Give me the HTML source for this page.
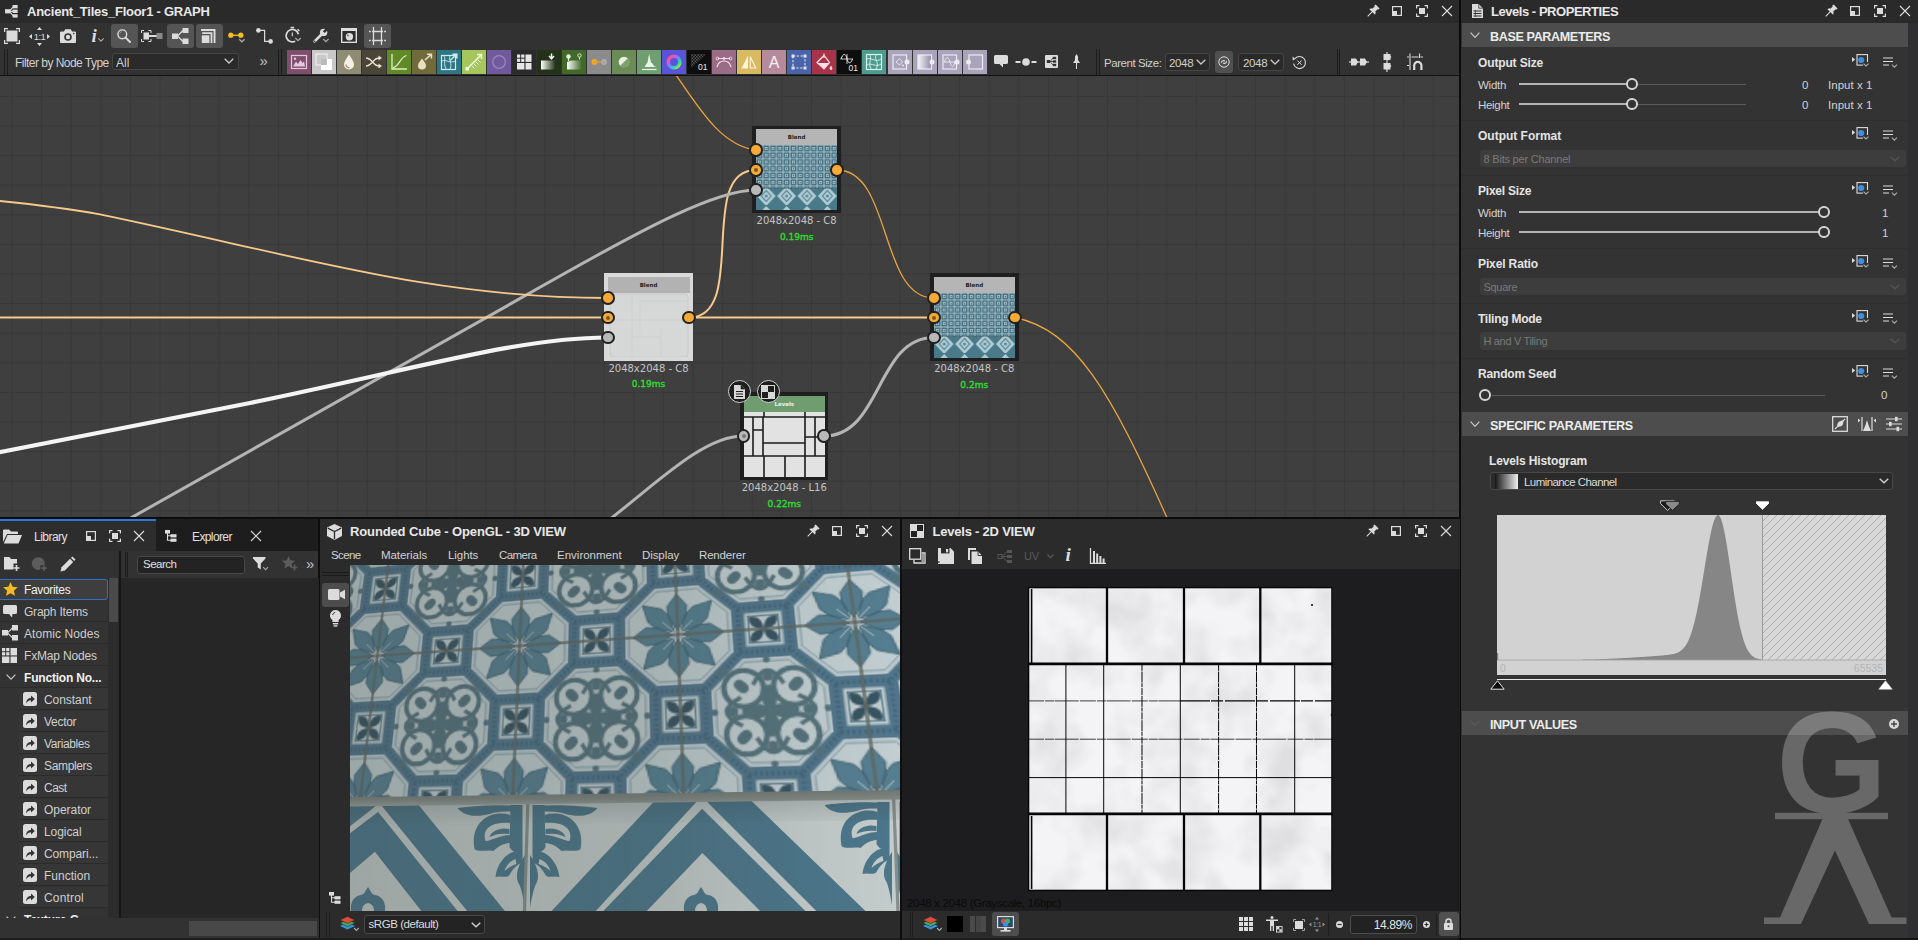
<!DOCTYPE html><html><head><meta charset="utf-8"><title>Substance Designer</title><style>
*{box-sizing:border-box;margin:0;padding:0}
html,body{width:1918px;height:940px;overflow:hidden;background:#1b1b1b}
body{font-family:"Liberation Sans",sans-serif;font-size:12px;color:#d6d6d6;position:relative}
.abs{position:absolute}
.t{position:absolute;white-space:nowrap;line-height:1}
.b{font-weight:bold}
svg{position:absolute;overflow:visible}
</style></head><body>
<div class="abs" style="left:0px;top:0px;width:1459.5px;height:22.5px;background:#2a2a2a;"></div>
<div class="abs" style="left:0px;top:22.5px;width:1459.5px;height:53px;background:#323232;"></div>
<div class="abs" style="left:0px;top:75px;width:1459.5px;height:1.2px;background:#121212;"></div>
<div class="abs" id="graph" style="left:0;top:76px;width:1459.5px;height:441px;background-color:#3f3f40;overflow:hidden;background-image:linear-gradient(to right,#38383a 1px,transparent 1px),linear-gradient(to bottom,#38383a 1px,transparent 1px);background-size:29.62px 29.62px;background-position:11.5px 19.8px">
<svg width="1459" height="441" viewBox="0 76 1459 441" style="left:0;top:0" fill="none" stroke-linecap="round">
<path d="M676,75 C700,110 722,146 756,150" stroke="#e9a43c" stroke-width="1.3"/>
<path d="M689,317.5 C749,317.5 696,170 756,170" stroke="#f7ca8c" stroke-width="2"/>
<path d="M90,541 L560,276 C640,231 715,190 756,190" stroke="#b4b4b4" stroke-width="3"/>
<path d="M-5,200.5 C40,205 70,209 100,214.4 C300,256 430,298 608,298" stroke="#f7ca8c" stroke-width="1.8"/>
<path d="M-5,317.5 L608,317.5" stroke="#f7ca8c" stroke-width="2"/>
<path d="M-5,453 L250,403 C420,368 520,337.5 608,337.5" stroke="#f4f4f4" stroke-width="4.2"/>
<path d="M689,317.5 L934,317.5" stroke="#f7ca8c" stroke-width="2"/>
<path d="M837,170 C892,170 879,298 934,298" stroke="#e9a43c" stroke-width="1.3"/>
<path d="M824,436 C882,436 876,337.5 934,337.5" stroke="#b4b4b4" stroke-width="3"/>
<path d="M594,532 L613.6,516.3 C660,480 705,436 743,436" stroke="#b4b4b4" stroke-width="3"/>
<path d="M1015,317.5 C1075,330 1110,390 1168,520" stroke="#e9a43c" stroke-width="1.3"/>
</svg>
</div>
<div class="abs" style="left:752.3px;top:125.8px;width:88.7px;height:87.6px;background:#1f1f1f"></div>
<div class="abs" style="left:755.8px;top:129.3px;width:81.7px;height:16px;background:#b5b5b5"></div>
<div class="t b" style="left:755.8px;top:135.3px;width:81.7px;text-align:center;font-size:5.5px;color:#222;font-family:'DejaVu Sans',sans-serif">Blend</div>
<div class="abs" style="left:755.8px;top:145.3px;width:81.7px;height:64.6px;overflow:hidden"><svg width="82" height="66" viewBox="0 0 82 66" style="left:0;top:0"><defs><pattern id="tp1" width="6.8" height="6.8" patternUnits="userSpaceOnUse"><rect width="6.8" height="6.8" fill="#a9c3cd"/><rect x="1.2" y="1.2" width="4.4" height="4.4" fill="none" stroke="#3a6777" stroke-width="1.3"/><rect x="2.8" y="2.8" width="1.3" height="1.3" fill="#3a6777"/></pattern><pattern id="tq1" width="20.4" height="20" patternUnits="userSpaceOnUse"><rect width="21" height="20" fill="#487a8a"/><path d="M10.2,1 L19.6,11 L10.2,21 L0.8,11 Z" fill="#b2ccd5"/><path d="M10.2,5.5 L15.2,11 L10.2,16.5 L5.2,11 Z" fill="none" stroke="#5d8d9c" stroke-width="1.2"/><circle cx="10.2" cy="11" r="1.6" fill="#5d8d9c"/></pattern></defs><rect width="82" height="43.56" fill="url(#tp1)"/><rect y="43.56" width="82" height="23.44" fill="url(#tq1)"/></svg></div>
<div class="t" style="left:736.65px;top:216.39999999999998px;width:120px;text-align:center;font-size:10px;color:#c4c4c4;font-family:'DejaVu Sans',sans-serif">2048x2048 - C8</div>
<div class="t" style="left:736.65px;top:232.89999999999998px;width:120px;text-align:center;font-size:9px;color:#2be02b;font-family:'DejaVu Sans',sans-serif;-webkit-text-stroke:0.3px #2be02b">0.19ms</div>
<div class="abs" style="left:749.3px;top:143.3px;width:13.4px;height:13.4px;border-radius:50%;background:#f7a935;border:2px solid #222"></div>
<div class="abs" style="left:749.3px;top:163.3px;width:13.4px;height:13.4px;border-radius:50%;background:#f7a935;border:2px solid #222"></div><div class="abs" style="left:754px;top:168px;width:4px;height:4px;border-radius:50%;background:#7a5a20"></div>
<div class="abs" style="left:749.3px;top:183.3px;width:13.4px;height:13.4px;border-radius:50%;background:#b9b9b9;border:2px solid #222"></div>
<div class="abs" style="left:830.3px;top:163.3px;width:13.4px;height:13.4px;border-radius:50%;background:#f7a935;border:2px solid #222"></div>
<div class="abs" style="left:604px;top:273.2px;width:89px;height:87.6px;background:#d9d9d9"></div>
<div class="abs" style="left:607.5px;top:276.7px;width:82.0px;height:16px;background:#b2b2b2"></div>
<div class="t b" style="left:607.5px;top:282.7px;width:82.0px;text-align:center;font-size:5.5px;color:#222;font-family:'DejaVu Sans',sans-serif">Blend</div>
<div class="abs" style="left:607.5px;top:292.7px;width:82.0px;height:64.6px;overflow:hidden"><svg width="82" height="66" viewBox="0 0 82 66" style="left:0;top:0"><rect width="82" height="66" fill="#dcdcdc"/><rect x="2" y="1" width="78" height="63" rx="3" fill="#d6d7d7" stroke="#c4c4c4" stroke-width="0.8"/><path d="M24,0V66M32,8V38M53,36V66M2,27H80M24,44H53M32,8H80" stroke="#cbcbcb" stroke-width="0.7" fill="none"/></svg></div>
<div class="t" style="left:588.5px;top:363.79999999999995px;width:120px;text-align:center;font-size:10px;color:#c4c4c4;font-family:'DejaVu Sans',sans-serif">2048x2048 - C8</div>
<div class="t" style="left:588.5px;top:380.29999999999995px;width:120px;text-align:center;font-size:9px;color:#2be02b;font-family:'DejaVu Sans',sans-serif;-webkit-text-stroke:0.3px #2be02b">0.19ms</div>
<div class="abs" style="left:601.3px;top:291.3px;width:13.4px;height:13.4px;border-radius:50%;background:#f7a935;border:2px solid #222"></div>
<div class="abs" style="left:601.3px;top:310.8px;width:13.4px;height:13.4px;border-radius:50%;background:#f7a935;border:2px solid #222"></div><div class="abs" style="left:606px;top:315.5px;width:4px;height:4px;border-radius:50%;background:#7a5a20"></div>
<div class="abs" style="left:601.3px;top:330.8px;width:13.4px;height:13.4px;border-radius:50%;background:#b9b9b9;border:2px solid #222"></div>
<div class="abs" style="left:682.3px;top:310.8px;width:13.4px;height:13.4px;border-radius:50%;background:#f7a935;border:2px solid #222"></div>
<div class="abs" style="left:930px;top:273.2px;width:88.5px;height:88px;background:#1f1f1f"></div>
<div class="abs" style="left:933.5px;top:276.7px;width:81.5px;height:16px;background:#b5b5b5"></div>
<div class="t b" style="left:933.5px;top:282.7px;width:81.5px;text-align:center;font-size:5.5px;color:#222;font-family:'DejaVu Sans',sans-serif">Blend</div>
<div class="abs" style="left:933.5px;top:292.7px;width:81.5px;height:65.0px;overflow:hidden"><svg width="82" height="66" viewBox="0 0 82 66" style="left:0;top:0"><defs><pattern id="tp3" width="6.8" height="6.8" patternUnits="userSpaceOnUse"><rect width="6.8" height="6.8" fill="#a9c3cd"/><rect x="1.2" y="1.2" width="4.4" height="4.4" fill="none" stroke="#3a6777" stroke-width="1.3"/><rect x="2.8" y="2.8" width="1.3" height="1.3" fill="#3a6777"/></pattern><pattern id="tq3" width="20.4" height="20" patternUnits="userSpaceOnUse"><rect width="21" height="20" fill="#487a8a"/><path d="M10.2,1 L19.6,11 L10.2,21 L0.8,11 Z" fill="#b2ccd5"/><path d="M10.2,5.5 L15.2,11 L10.2,16.5 L5.2,11 Z" fill="none" stroke="#5d8d9c" stroke-width="1.2"/><circle cx="10.2" cy="11" r="1.6" fill="#5d8d9c"/></pattern></defs><rect width="82" height="43.56" fill="url(#tp3)"/><rect y="43.56" width="82" height="23.44" fill="url(#tq3)"/></svg></div>
<div class="t" style="left:914.25px;top:364.2px;width:120px;text-align:center;font-size:10px;color:#c4c4c4;font-family:'DejaVu Sans',sans-serif">2048x2048 - C8</div>
<div class="t" style="left:914.25px;top:380.7px;width:120px;text-align:center;font-size:9px;color:#2be02b;font-family:'DejaVu Sans',sans-serif;-webkit-text-stroke:0.3px #2be02b">0.2ms</div>
<div class="abs" style="left:927.3px;top:291.3px;width:13.4px;height:13.4px;border-radius:50%;background:#f7a935;border:2px solid #222"></div>
<div class="abs" style="left:927.3px;top:310.8px;width:13.4px;height:13.4px;border-radius:50%;background:#f7a935;border:2px solid #222"></div><div class="abs" style="left:932px;top:315.5px;width:4px;height:4px;border-radius:50%;background:#7a5a20"></div>
<div class="abs" style="left:927.3px;top:330.8px;width:13.4px;height:13.4px;border-radius:50%;background:#b9b9b9;border:2px solid #222"></div>
<div class="abs" style="left:1008.3px;top:310.8px;width:13.4px;height:13.4px;border-radius:50%;background:#f7a935;border:2px solid #222"></div>
<div class="abs" style="left:740.4px;top:392.3px;width:87.8px;height:88px;background:#1f1f1f"></div>
<div class="abs" style="left:743.9px;top:395.8px;width:80.8px;height:16px;background:#6f9d6f"></div>
<div class="t b" style="left:743.9px;top:401.8px;width:80.8px;text-align:center;font-size:5.5px;color:#f0f0f0;font-family:'DejaVu Sans',sans-serif">Levels</div>
<div class="abs" style="left:743.9px;top:411.8px;width:80.8px;height:65.0px;overflow:hidden"><svg width="81" height="65" viewBox="0 0 81 65" style="left:0;top:0"><rect width="81" height="65" fill="#e2e2e2"/><path d="M0,5H81M0,44H81M9,5V44M19,5V44M61,5V44M71,5V44M20,0V5M61,0V5M19,31H61M20,44V65M41,44V65M61,44V65M9,18H19M61,25H81" stroke="#1c1c1c" stroke-width="1.6" fill="none"/></svg></div>
<div class="t" style="left:724.3px;top:483.3px;width:120px;text-align:center;font-size:10px;color:#c4c4c4;font-family:'DejaVu Sans',sans-serif">2048x2048 - L16</div>
<div class="t" style="left:724.3px;top:499.8px;width:120px;text-align:center;font-size:9px;color:#2be02b;font-family:'DejaVu Sans',sans-serif;-webkit-text-stroke:0.3px #2be02b">0.22ms</div>
<div class="abs" style="left:736.8px;top:429.3px;width:13.4px;height:13.4px;border-radius:50%;background:#b9b9b9;border:2px solid #222"></div>
<div class="abs" style="left:817.3px;top:429.3px;width:13.4px;height:13.4px;border-radius:50%;background:#b9b9b9;border:2px solid #222"></div>
<div class="abs" style="left:741.5px;top:434px;width:4px;height:4px;border-radius:50%;background:#777"></div>
<div class="abs" style="left:727.5px;top:380.0px;width:23px;height:23px;border-radius:50%;background:#1e1e1e;border:1.5px solid #d0d0d0"></div>
<div class="abs" style="left:756.8px;top:380.0px;width:23px;height:23px;border-radius:50%;background:#1e1e1e;border:1.5px solid #d0d0d0"></div>
<svg width="12" height="14" viewBox="0 0 12 14" style="left:733.5px;top:384.5px"><path d="M0,0H7L11,4V14H0Z" fill="#d8d8d8"/><path d="M7,0V4H11" fill="#1e1e1e" stroke="#1e1e1e" stroke-width="0.6"/><path d="M2,6.5H9M2,9H9M2,11.5H9" stroke="#1e1e1e" stroke-width="1.2"/></svg>
<svg width="14" height="14" viewBox="0 0 14 14" style="left:761.3px;top:384.5px"><rect x="0.5" y="0.5" width="13" height="13" fill="#1e1e1e" stroke="#d8d8d8"/><rect x="1" y="1" width="6" height="6" fill="#d8d8d8"/><rect x="7" y="7" width="6" height="6" fill="#d8d8d8"/></svg>
<svg width="13.5" height="12.6" viewBox="0 0 16 15" style="left:5px;top:5px"><g fill="#dcdcdc"><rect x="0" y="5" width="6" height="5"/><rect x="9" y="0" width="6" height="4"/><rect x="9" y="5.5" width="6" height="4"/><rect x="9" y="11" width="6" height="4"/></g><path d="M5,7.5 L10,2 M5,7.5 H10 M5,7.5 L10,13" stroke="#dcdcdc" stroke-width="1.4" fill="none"/></svg>
<div class="t b" style="left:27px;top:4.5px;font-size:13px;color:#e8e8e8;letter-spacing:-0.15px;letter-spacing:-0.255px">Ancient_Tiles_Floor1 - GRAPH</div>
<svg width="14" height="14" viewBox="0 0 14 14" style="left:1366px;top:4px"><g transform="rotate(45 7 7)"><rect x="4.2" y="0.5" width="5.6" height="2" fill="#dcdcdc"/><rect x="5" y="2" width="4" height="4.2" fill="#dcdcdc"/><path d="M2.8,8.2 L11.2,8.2 L9.6,5.8 L4.4,5.8 Z" fill="#dcdcdc"/><rect x="6.5" y="8" width="1" height="6.5" fill="#dcdcdc"/></g></svg>
<svg width="10" height="10" viewBox="0 0 10 10" style="left:1392px;top:6px"><rect x="0.6" y="0.6" width="8.8" height="8.8" fill="none" stroke="#dcdcdc" stroke-width="1.2"/><rect x="0" y="5" width="5" height="5" fill="#dcdcdc"/></svg>
<svg width="12" height="12" viewBox="0 0 12 12" style="left:1416px;top:5px"><path d="M0.6,3.5V0.6H3.5 M8.5,0.6H11.4V3.5 M11.4,8.5V11.4H8.5 M3.5,11.4H0.6V8.5" fill="none" stroke="#dcdcdc" stroke-width="1.2"/><rect x="3" y="3" width="6" height="6" fill="#dcdcdc"/></svg>
<svg width="10" height="10" viewBox="0 0 10 10" style="left:1442px;top:6px"><path d="M0,0L10,10M10,0L0,10" stroke="#dcdcdc" stroke-width="1.1"/></svg>
<div class="abs" style="left:111px;top:24px;width:27px;height:24px;background:#555555;border-radius:3px"></div>
<div class="abs" style="left:167px;top:24px;width:27px;height:24px;background:#555555;border-radius:3px"></div>
<div class="abs" style="left:195.5px;top:24px;width:27px;height:24px;background:#555555;border-radius:3px"></div>
<div class="abs" style="left:364px;top:24px;width:27px;height:24px;background:#555555;border-radius:3px"></div>
<svg width="16" height="16" viewBox="0 0 16 16" style="left:4px;top:28px"><rect x="2.5" y="2.5" width="11" height="11" fill="#dcdcdc"/><path d="M0.6,4V0.6H4 M12,0.6H15.4V4 M15.4,12V15.4H12 M4,15.4H0.6V12" fill="none" stroke="#dcdcdc" stroke-width="1.2"/></svg>
<svg width="21" height="19" viewBox="0 0 21 19" style="left:29px;top:27px"><path d="M10.5,0 L13,3 H8Z M10.5,19 L13,16 H8Z M0,9.5 L3,7 V12Z M21,9.5 L18,7 V12Z" fill="#dcdcdc"/><text x="10.5" y="13" font-size="9.5" text-anchor="middle" fill="#dcdcdc" font-family="Liberation Sans,sans-serif" letter-spacing="-0.6">1:1</text></svg>
<svg width="16" height="14" viewBox="0 0 16 14" style="left:60px;top:29px"><path d="M0,3.5 Q0,2.5 1,2.5 H4 L5.2,0.3 H10.8 L12,2.5 H15 Q16,2.5 16,3.5 V13 Q16,14 15,14 H1 Q0,14 0,13Z" fill="#dcdcdc"/><circle cx="8" cy="8" r="3.8" fill="#323232"/><circle cx="8" cy="8" r="2.2" fill="#dcdcdc"/><circle cx="13.7" cy="4.6" r="0.8" fill="#323232"/></svg>
<div class="t b" style="left:91.5px;top:25.5px;font-size:19px;color:#dcdcdc;font-family:'Liberation Serif',serif;font-style:italic">i</div>
<svg width="6" height="4" viewBox="0 0 6 4" style="left:98px;top:38px"><path d="M0.3,0.3 L3,3.2 L5.7,0.3" fill="none" stroke="#aaa" stroke-width="1.1"/></svg>
<svg width="14" height="14" viewBox="0 0 14 14" style="left:117px;top:29px"><circle cx="5.3" cy="5.3" r="4.4" fill="none" stroke="#dcdcdc" stroke-width="1.4"/><path d="M8.6,8.6 L13,13" stroke="#dcdcdc" stroke-width="2" stroke-linecap="round"/><path d="M2.8,4.6 Q3.3,2.9 5,2.7" stroke="#999" stroke-width="0.7" fill="none"/></svg>
<svg width="22" height="12" viewBox="0 0 22 12" style="left:141px;top:30px"><path d="M0.5,3V0.5H3 M7.5,0.5H10V3 M10,9V11.5H7.5 M3,11.5H0.5V9" fill="none" stroke="#dcdcdc" stroke-width="1"/><rect x="2.5" y="2.5" width="5.5" height="7" fill="#dcdcdc"/><rect x="8" y="5" width="8" height="2" fill="#dcdcdc"/><rect x="15.5" y="3" width="6" height="6" fill="#888"/></svg>
<svg width="17" height="16" viewBox="0 0 17 16" style="left:172px;top:28px"><g fill="#dcdcdc"><rect x="0" y="5.5" width="6" height="5.5"/><rect x="10.5" y="0" width="6" height="5"/><rect x="10.5" y="10.5" width="6" height="5.5"/></g><path d="M5.5,8 L11,2.5 M5.5,8 L11,13.5" stroke="#dcdcdc" stroke-width="1.3" fill="none"/></svg>
<svg width="15" height="14" viewBox="0 0 15 14" style="left:201px;top:29px"><path d="M0,0H14.5V14H12.6V1.9H0Z M1.2,3.2H11.4V14H9.6V5H1.2Z" fill="#dcdcdc"/><rect x="0.8" y="6.3" width="7.6" height="7.7" fill="#dcdcdc"/></svg>
<svg width="18" height="12" viewBox="0 0 18 12" style="left:228px;top:32px"><circle cx="2.8" cy="3.2" r="2.6" fill="#f5c020"/><circle cx="12.8" cy="3.2" r="2.6" fill="#f5c020"/><rect x="2" y="2.6" width="11" height="1.3" fill="#f5c020"/><path d="M11.2,7.2 L13.9,9.8 L16.6,7.2" fill="none" stroke="#aaa" stroke-width="1.2"/></svg>
<svg width="18" height="16" viewBox="0 0 18 16" style="left:256px;top:28px"><circle cx="2.4" cy="2.4" r="2.3" fill="#dcdcdc"/><circle cx="14.6" cy="13.4" r="2.3" fill="#dcdcdc"/><path d="M2.4,2.4H8.6V13.4H14.6" fill="none" stroke="#dcdcdc" stroke-width="1.2"/></svg>
<svg width="18" height="18" viewBox="0 0 18 18" style="left:284px;top:26px"><path d="M11.2,15.2 A6.2,6.2 0 1 1 14.4,8.2" fill="none" stroke="#dcdcdc" stroke-width="1.7"/><rect x="6.5" y="0.8" width="3.6" height="1.4" fill="#dcdcdc"/><path d="M8.3,6.4V10.2" stroke="#dcdcdc" stroke-width="1.1"/><path d="M13.6,3.2 L15.4,5" stroke="#dcdcdc" stroke-width="1.3"/><path d="M11.3,12 L14,14.7 L16.7,12" fill="none" stroke="#aaa" stroke-width="1.2"/></svg>
<svg width="18" height="16" viewBox="0 0 18 16" style="left:312px;top:28px"><path d="M2.6,13.4 L10.2,5.8" stroke="#dcdcdc" stroke-width="2.7" stroke-linecap="round"/><circle cx="11.6" cy="4.4" r="3.7" fill="#dcdcdc"/><path d="M11.8,4.2 L16,0" stroke="#323232" stroke-width="2.6"/><circle cx="2.7" cy="13.3" r="0.8" fill="#323232"/><path d="M11.2,11 L13.9,13.7 L16.6,11" fill="none" stroke="#aaa" stroke-width="1.2"/></svg>
<svg width="16" height="15" viewBox="0 0 16 15" style="left:341px;top:28px"><rect x="0.7" y="0.7" width="14.6" height="13.6" fill="#2b2b2b" stroke="#dcdcdc" stroke-width="1.4"/><rect x="0" y="0" width="16" height="3" fill="#dcdcdc"/><circle cx="8.4" cy="8.8" r="3.7" fill="#dcdcdc"/><circle cx="6.9" cy="7.5" r="1.1" fill="#777"/></svg>
<svg width="17" height="18" viewBox="0 0 17 18" style="left:369px;top:27px"><path d="M4.5,0V18 M12.5,0V18 M0,4.5H1.8 M3,4.5H14 M15.2,4.5H17 M0,13.5H1.8 M3,13.5H14 M15.2,13.5H17" stroke="#dcdcdc" stroke-width="1.3" fill="none"/></svg>
<div class="abs" style="left:4px;top:49px;width:1px;height:26px;background:#1c1c1c;"></div>
<div class="abs" style="left:7px;top:49px;width:1px;height:26px;background:#1c1c1c;"></div>
<div class="t" style="left:15px;top:57.3px;font-size:12px;color:#d0d0d0;letter-spacing:-0.1px;letter-spacing:-0.533px">Filter by Node Type</div>
<div class="abs" style="left:112px;top:53px;width:127px;height:17px;background:#2a2a2a;border:1px solid #454545;border-radius:3px"></div>
<div class="t" style="left:116px;top:57.3px;font-size:12px;color:#d0d0d0;">All</div>
<svg width="10" height="6" viewBox="0 0 10 6" style="left:224px;top:58px"><path d="M0.7,0.7 L5,5 L9.3,0.7" fill="none" stroke="#c8c8c8" stroke-width="1.3"/></svg>
<div class="t" style="left:259.5px;top:53px;font-size:15px;color:#c0c0c0;">»</div>
<div class="abs" style="left:278px;top:49px;width:1px;height:26px;background:#1c1c1c;"></div>
<div class="abs" style="left:280.5px;top:49px;width:1px;height:26px;background:#1c1c1c;"></div>
<div class="abs" style="left:287px;top:50px;width:24px;height:24px;background:#7d4f6c"></div>
<svg width="24" height="24" viewBox="0 0 24 24" style="left:287px;top:50px"><rect x="4.5" y="5.5" width="15" height="13" fill="none" stroke="#e8c8dc" stroke-width="1.2"/><path d="M6,16.5 L9,11.5 L11,14 L13.5,10 L15.5,13 L17,11.5 L18,16.5Z" fill="#e8c8dc"/><circle cx="8" cy="8.8" r="1.2" fill="#e8c8dc"/></svg>
<div class="abs" style="left:312px;top:50px;width:24px;height:24px;background:#c9c9c9"></div>
<svg width="24" height="24" viewBox="0 0 24 24" style="left:312px;top:50px"><rect x="4" y="4" width="11" height="11" fill="none" stroke="#eee" stroke-width="1.2"/><rect x="9" y="9" width="11" height="11" fill="#fff"/><rect x="9" y="9" width="6" height="6" fill="#bbb"/></svg>
<div class="abs" style="left:337px;top:50px;width:24px;height:24px;background:#908c73"></div>
<svg width="24" height="24" viewBox="0 0 24 24" style="left:337px;top:50px"><path d="M12,4.5 C14,8 17,11 17,14.5 A5,5 0 0 1 7,14.5 C7,11 10,8 12,4.5Z" fill="#f4f0e4"/><path d="M9,14.5 A3,3 0 0 0 12.5,17.6" stroke="#908c73" stroke-width="1.2" fill="none"/></svg>
<div class="abs" style="left:362px;top:50px;width:24px;height:24px;background:#4a4536"></div>
<svg width="24" height="24" viewBox="0 0 24 24" style="left:362px;top:50px"><path d="M4,8 C10,8 11,16 17,16 M4,16 C10,16 11,8 17,8" stroke="#e8e4d4" stroke-width="1.5" fill="none"/><path d="M16.5,5.5 L20,8 L16.5,10.5Z M16.5,13.5 L20,16 L16.5,18.5Z" fill="#e8e4d4"/></svg>
<div class="abs" style="left:387px;top:50px;width:24px;height:24px;background:#5f8a27"></div>
<svg width="24" height="24" viewBox="0 0 24 24" style="left:387px;top:50px"><path d="M5,4V19H20" stroke="#e4f0c8" stroke-width="1.3" fill="none"/><path d="M6,17.5 C12,17 13,7 19.5,5.5" stroke="#e4f0c8" stroke-width="1.2" fill="none"/></svg>
<div class="abs" style="left:412px;top:50px;width:24px;height:24px;background:#716b3c"></div>
<svg width="24" height="24" viewBox="0 0 24 24" style="left:412px;top:50px"><path d="M10,8.5 C11.5,11 14,13 14,15.5 A4,4 0 0 1 6,15.5 C6,13 8.5,11 10,8.5Z" fill="#e8e0c0"/><path d="M13,10 L19,4.5 M15,4.2 H19.4 V8.6" stroke="#e8e0c0" stroke-width="1.6" fill="none"/></svg>
<div class="abs" style="left:437px;top:50px;width:24px;height:24px;background:#2f7684"></div>
<svg width="24" height="24" viewBox="0 0 24 24" style="left:437px;top:50px"><rect x="4.5" y="5.5" width="14" height="14" fill="none" stroke="#d0ecf0" stroke-width="1.2"/><path d="M7,6 C9,10 6,13 9,19 M13,6 C11,11 16,13 13,19 M5,11 C9,9 13,14 18,11" stroke="#d0ecf0" stroke-width="0.9" fill="none"/><path d="M13,10.5 L19.5,4.5 M15.5,4.2 H19.8 V8.4" stroke="#d0ecf0" stroke-width="1.5" fill="none"/></svg>
<div class="abs" style="left:462px;top:50px;width:24px;height:24px;background:#a5c65d"></div>
<svg width="24" height="24" viewBox="0 0 24 24" style="left:462px;top:50px"><path d="M5,19 L19,5 M15,4.6 H19.5 V9" stroke="#f4fce0" stroke-width="1.5" fill="none"/><rect x="3.5" y="17" width="3.5" height="3.5" fill="#f4fce0"/><path d="M10,16 L12.5,18.5 M12,14 L14.5,16.5 M14,12 L16.5,14.5 M16,10 L18.5,12.5" stroke="#f4fce0" stroke-width="1"/></svg>
<div class="abs" style="left:487px;top:50px;width:24px;height:24px;background:#705a9c"></div>
<svg width="24" height="24" viewBox="0 0 24 24" style="left:487px;top:50px"><circle cx="12" cy="12" r="6.3" fill="none" stroke="#9c88c8" stroke-width="1.2"/></svg>
<div class="abs" style="left:512px;top:50px;width:24px;height:24px;background:#2b2b2b"></div>
<svg width="24" height="24" viewBox="0 0 24 24" style="left:512px;top:50px"><g fill="#e6e6e6"><rect x="5" y="4.5" width="3.2" height="3.2"/><rect x="9.2" y="4.5" width="3.2" height="3.2"/><rect x="5" y="8.7" width="3.2" height="3.2"/><rect x="9.2" y="8.7" width="3.2" height="3.2"/><rect x="13.5" y="4.5" width="6" height="7.4"/><rect x="5" y="13" width="7.4" height="6.5"/><rect x="13.5" y="13" width="6" height="6.5"/></g></svg>
<div class="abs" style="left:537px;top:50px;width:24px;height:24px;background:#233219"></div>
<svg width="24" height="24" viewBox="0 0 24 24" style="left:537px;top:50px"><defs><linearGradient id="g10" x1="0" x2="1"><stop offset="0" stop-color="#fff"/><stop offset="1" stop-color="#2a3a20"/></linearGradient></defs><rect x="4" y="10.5" width="14" height="9" fill="url(#g10)"/><path d="M14.5,3.5V8 M12,6 L14.5,8.8 L17,6" stroke="#f0f0f0" stroke-width="1.5" fill="none"/></svg>
<div class="abs" style="left:562px;top:50px;width:24px;height:24px;background:#40692a"></div>
<svg width="24" height="24" viewBox="0 0 24 24" style="left:562px;top:50px"><defs><linearGradient id="g11" x1="0" x2="1"><stop offset="0" stop-color="#fff"/><stop offset="1" stop-color="#4a7434"/></linearGradient></defs><path d="M5,12 L9,10.5 H19 V19.5 H5Z" fill="url(#g11)"/><circle cx="6.5" cy="6.5" r="2.2" fill="#e6f0dc"/><path d="M6.5,8 V11" stroke="#e6f0dc" stroke-width="1.2"/><circle cx="17.5" cy="5.5" r="1.7" fill="none" stroke="#e6f0dc" stroke-width="0.9"/><path d="M17.5,7.2V9.5" stroke="#e6f0dc" stroke-width="0.9"/></svg>
<div class="abs" style="left:587px;top:50px;width:24px;height:24px;background:#8b8b8b"></div>
<svg width="24" height="24" viewBox="0 0 24 24" style="left:587px;top:50px"><circle cx="7.5" cy="12" r="3" fill="#f5a623"/><circle cx="17" cy="12" r="3" fill="#aaa"/><rect x="7" y="11.3" width="10" height="1.4" fill="#c9a060"/></svg>
<div class="abs" style="left:612px;top:50px;width:24px;height:24px;background:#6c8c57"></div>
<svg width="24" height="24" viewBox="0 0 24 24" style="left:612px;top:50px"><circle cx="12" cy="12" r="5.3" fill="#e8f0e0"/><path d="M8.2,15.8 A5.3,5.3 0 0 0 15.8,8.2Z" fill="#7f9f6c"/></svg>
<div class="abs" style="left:637px;top:50px;width:24px;height:24px;background:#6f9f70"></div>
<svg width="24" height="24" viewBox="0 0 24 24" style="left:637px;top:50px"><path d="M5,17 H7.5 L9,14.5 L10.5,12.5 L11.5,7 L12.3,4 L13,8 L14,12.5 L15.5,13.5 L17,16 L19.5,17Z" fill="#e8f6e8"/><path d="M5,19.5H19.5" stroke="#e8f6e8" stroke-width="1.2"/></svg>
<div class="abs" style="left:662px;top:50px;width:24px;height:24px;background:#5a55d8"></div>
<svg width="24" height="24" viewBox="0 0 24 24" style="left:662px;top:50px"><defs><linearGradient id="g15" x1="0" y1="0" x2="1" y2="1"><stop offset="0" stop-color="#ff5a5a"/><stop offset="0.3" stop-color="#e050e0"/><stop offset="0.55" stop-color="#40a0ff"/><stop offset="0.8" stop-color="#40e080"/><stop offset="1" stop-color="#f0e040"/></linearGradient></defs><circle cx="12" cy="12" r="5.8" fill="none" stroke="url(#g15)" stroke-width="3.6"/></svg>
<div class="abs" style="left:687px;top:50px;width:24px;height:24px;background:#0e0e0e"></div>
<svg width="24" height="24" viewBox="0 0 24 24" style="left:687px;top:50px"><defs><pattern id="ck16" width="3" height="3" patternUnits="userSpaceOnUse"><rect width="1.5" height="1.5" fill="#555"/><rect x="1.5" y="1.5" width="1.5" height="1.5" fill="#555"/></pattern></defs><path d="M4,4H19L4,18Z" fill="url(#ck16)"/><text x="11" y="20" font-size="8.5" fill="#e8e8e8" font-family="Liberation Sans,sans-serif">01</text></svg>
<div class="abs" style="left:712px;top:50px;width:24px;height:24px;background:#9b6c85"></div>
<svg width="24" height="24" viewBox="0 0 24 24" style="left:712px;top:50px"><path d="M5,17 C7,9 17,9 19,17" stroke="#f8e4f0" stroke-width="1.2" fill="none"/><path d="M6,8.5 H18" stroke="#f8e4f0" stroke-width="0.9"/><circle cx="5.5" cy="8.5" r="1.3" fill="none" stroke="#f8e4f0" stroke-width="0.9"/><circle cx="18.5" cy="8.5" r="1.3" fill="none" stroke="#f8e4f0" stroke-width="0.9"/><rect x="10.8" y="7.3" width="2.4" height="2.4" fill="#f8e4f0"/></svg>
<div class="abs" style="left:737px;top:50px;width:24px;height:24px;background:#d9b962"></div>
<svg width="24" height="24" viewBox="0 0 24 24" style="left:737px;top:50px"><path d="M11,5.5 V18.5 H4.5Z" fill="#fff6dc"/><path d="M13.2,6.8 V18 H18.8Z" fill="none" stroke="#fff6dc" stroke-width="1.1"/></svg>
<div class="abs" style="left:762px;top:50px;width:24px;height:24px;background:#b58b9b"></div>
<svg width="24" height="24" viewBox="0 0 24 24" style="left:762px;top:50px"><text x="12" y="18" font-size="16" text-anchor="middle" fill="#fdf0f6" font-family="Liberation Sans,sans-serif">A</text></svg>
<div class="abs" style="left:787px;top:50px;width:24px;height:24px;background:#4b63a9"></div>
<svg width="24" height="24" viewBox="0 0 24 24" style="left:787px;top:50px"><rect x="6" y="6" width="12" height="12" fill="none" stroke="#dfe6fa" stroke-width="1.1" stroke-dasharray="2.2 1.6"/><g fill="#dfe6fa"><rect x="4.5" y="4.5" width="3" height="3"/><rect x="16.5" y="4.5" width="3" height="3"/><rect x="4.5" y="16.5" width="3" height="3"/><rect x="16.5" y="16.5" width="3" height="3"/></g></svg>
<div class="abs" style="left:812px;top:50px;width:24px;height:24px;background:#a93349"></div>
<svg width="24" height="24" viewBox="0 0 24 24" style="left:812px;top:50px"><path d="M5,12.5 L12,5.5 L17.5,12.5 L12,19Z" fill="none" stroke="#fbe0e6" stroke-width="1.2"/><path d="M5.6,13 H17 L12,18.6Z" fill="#fbe0e6"/><path d="M12,3.5V8" stroke="#fbe0e6" stroke-width="1.1"/><path d="M19,15.5 C19.8,17 20.4,17.6 20.4,18.5 A1.4,1.4 0 0 1 17.6,18.5 C17.6,17.6 18.2,17 19,15.5Z" fill="#fbe0e6"/></svg>
<div class="abs" style="left:837px;top:50px;width:24px;height:24px;background:#0e0e0e"></div>
<svg width="24" height="24" viewBox="0 0 24 24" style="left:837px;top:50px"><path d="M4,9 C6,3 9,3 10,9 C11,14 14,14 15.5,9" stroke="#e8e8e8" stroke-width="1" fill="none"/><path d="M3.5,9H16 M10,4V14" stroke="#e8e8e8" stroke-width="0.8"/><text x="11.5" y="20.5" font-size="8.5" fill="#e8e8e8" font-family="Liberation Sans,sans-serif">01</text></svg>
<div class="abs" style="left:862px;top:50px;width:24px;height:24px;background:#4c9b8d"></div>
<svg width="24" height="24" viewBox="0 0 24 24" style="left:862px;top:50px"><rect x="4.5" y="4.5" width="15" height="15" fill="none" stroke="#d8f4ee" stroke-width="1.2"/><path d="M8,5 C10,9 6,13 9,19 M14,5 C12,10 18,13 14,19 M5,9 C9,7 14,13 19,9 M5,15 C9,12 14,18 19,14" stroke="#d8f4ee" stroke-width="0.9" fill="none"/></svg>
<div class="abs" style="left:888px;top:50px;width:24px;height:24px;background:#a9a4ba"></div>
<svg width="24" height="24" viewBox="0 0 24 24" style="left:888px;top:50px"><rect x="5" y="5" width="13.5" height="14" fill="none" stroke="#ecebf4" stroke-width="1.2"/><path d="M8,12 L11.5,8.5 L14.5,12 L11.5,15Z" fill="none" stroke="#ecebf4" stroke-width="0.9"/><circle cx="19" cy="12" r="2.5" fill="#ecebf4"/><circle cx="15" cy="15.5" r="0.9" fill="#ecebf4"/></svg>
<div class="abs" style="left:913px;top:50px;width:24px;height:24px;background:#a9a4ba"></div>
<svg width="24" height="24" viewBox="0 0 24 24" style="left:913px;top:50px"><defs><linearGradient id="g25" x1="0" x2="1"><stop offset="0" stop-color="#f4f4fa"/><stop offset="1" stop-color="#8e8aa2"/></linearGradient></defs><rect x="5" y="5" width="13.5" height="14" fill="url(#g25)" stroke="#ecebf4" stroke-width="1.2"/><circle cx="19" cy="12" r="2.5" fill="#ecebf4"/></svg>
<div class="abs" style="left:938px;top:50px;width:24px;height:24px;background:#a9a4ba"></div>
<svg width="24" height="24" viewBox="0 0 24 24" style="left:938px;top:50px"><rect x="5" y="5" width="13.5" height="14" fill="none" stroke="#ecebf4" stroke-width="1.2"/><path d="M6.5,12 C8,6 10.5,6 12,12 C13.5,18 15.5,18 17,12 M6,12H17" stroke="#ecebf4" stroke-width="0.9" fill="none"/><circle cx="19" cy="12" r="2.5" fill="#ecebf4"/></svg>
<div class="abs" style="left:963px;top:50px;width:24px;height:24px;background:#a9a4ba"></div>
<svg width="24" height="24" viewBox="0 0 24 24" style="left:963px;top:50px"><rect x="6" y="5" width="13.5" height="14" fill="none" stroke="#ecebf4" stroke-width="1.2"/><circle cx="5.5" cy="12" r="2.5" fill="#ecebf4"/></svg>
<svg width="14" height="13" viewBox="0 0 14 13" style="left:994px;top:55px"><path d="M1.5,0H12.5Q14,0 14,1.5V7.5Q14,9 12.5,9H9L9,12.5L5.5,9H1.5Q0,9 0,7.5V1.5Q0,0 1.5,0Z" fill="#dcdcdc"/></svg>
<svg width="22" height="8" viewBox="0 0 22 8" style="left:1015px;top:58px"><circle cx="11" cy="4" r="3.8" fill="#dcdcdc"/><rect x="0.5" y="3" width="5" height="2" fill="#dcdcdc"/><rect x="16.5" y="3" width="5" height="2" fill="#dcdcdc"/></svg>
<svg width="13" height="13" viewBox="0 0 13 13" style="left:1045px;top:55px"><rect width="13" height="13" rx="1" fill="#dcdcdc"/><g fill="#323232"><rect x="1.8" y="5" width="3.2" height="3"/><rect x="7.8" y="1.8" width="3.4" height="2.4"/><rect x="7.8" y="5.3" width="3.4" height="2.4"/><rect x="7.8" y="8.8" width="3.4" height="2.4"/></g><path d="M5,6.5 L8,3 M5,6.5H8 M5,6.5 L8,10" stroke="#323232" stroke-width="0.8"/></svg>
<svg width="9" height="15" viewBox="0 0 9 15" style="left:1072px;top:54px"><path d="M4.5,0 L6,2.5 V6 L8,9 H1 L3,6 V2.5Z" fill="#dcdcdc"/><rect x="4" y="9" width="1" height="6" fill="#dcdcdc"/></svg>
<div class="abs" style="left:1096px;top:49px;width:1px;height:26px;background:#1c1c1c;"></div>
<div class="abs" style="left:1098.5px;top:49px;width:1px;height:26px;background:#1c1c1c;"></div>
<div class="t" style="left:1104px;top:57.5px;font-size:11.5px;color:#d0d0d0;letter-spacing:-0.2px;letter-spacing:-0.437px">Parent Size:</div>
<div class="abs" style="left:1165px;top:53px;width:45px;height:18px;background:#2a2a2a;border:1px solid #454545;border-radius:3px"></div>
<div class="t" style="left:1169px;top:58px;font-size:11.5px;color:#d0d0d0;letter-spacing:-0.4px;letter-spacing:-0.346px">2048</div>
<svg width="10" height="6" viewBox="0 0 10 6" style="left:1196px;top:59px"><path d="M0.7,0.7 L5,5 L9.3,0.7" fill="none" stroke="#c8c8c8" stroke-width="1.3"/></svg>
<div class="abs" style="left:1215px;top:51px;width:18px;height:22px;background:#505050;border-radius:3px"></div>
<svg width="12" height="12" viewBox="0 0 12 12" style="left:1218px;top:56px"><circle cx="6" cy="6" r="5.2" fill="none" stroke="#dcdcdc" stroke-width="1"/><path d="M3.4,6.8 C3.4,4.6 6,4.2 7,5.2 M8.6,5.2 C8.6,7.4 6,7.8 5,6.8" stroke="#dcdcdc" stroke-width="1.1" fill="none"/></svg>
<div class="abs" style="left:1238px;top:53px;width:46px;height:18px;background:#2a2a2a;border:1px solid #454545;border-radius:3px"></div>
<div class="t" style="left:1243px;top:58px;font-size:11.5px;color:#d0d0d0;letter-spacing:-0.4px;letter-spacing:-0.346px">2048</div>
<svg width="10" height="6" viewBox="0 0 10 6" style="left:1270px;top:59px"><path d="M0.7,0.7 L5,5 L9.3,0.7" fill="none" stroke="#c8c8c8" stroke-width="1.3"/></svg>
<svg width="15" height="15" viewBox="0 0 15 15" style="left:1292px;top:55px"><path d="M3,3.6 A6,6 0 1 1 1.6,8.6" fill="none" stroke="#dcdcdc" stroke-width="1.1"/><path d="M0.6,1.6 L3.4,4 L0.8,5.6Z" fill="#dcdcdc"/><path d="M5.4,5.6 L9.6,9.8 M9.6,5.6 L5.4,9.8" stroke="#dcdcdc" stroke-width="1"/></svg>
<div class="abs" style="left:1336.5px;top:49px;width:1px;height:26px;background:#1c1c1c;"></div>
<div class="abs" style="left:1339px;top:49px;width:1px;height:26px;background:#1c1c1c;"></div>
<svg width="20" height="10" viewBox="0 0 20 10" style="left:1349px;top:57px"><rect x="0" y="4.4" width="20" height="1.2" fill="#dcdcdc"/><path d="M2,1.5H7L9,5L7,8.5H2Z M11,1.5H16L18,5L16,8.5H11Z" fill="#dcdcdc"/></svg>
<svg width="10" height="20" viewBox="0 0 10 20" style="left:1382px;top:52px"><rect x="4.4" y="0" width="1.2" height="20" fill="#dcdcdc"/><path d="M1.5,2H8.5V4L9.5,5L8.5,6V8H1.5Z M1.5,11H8.5V13L9.5,14L8.5,15V17.5H1.5Z" fill="#dcdcdc"/></svg>
<svg width="17" height="18" viewBox="0 0 17 18" style="left:1407px;top:53px"><path d="M3,0.5V17 M12.5,0.5V5 M0,4H2 M4.5,4H11.5 M13.5,4H16 M0,12.5H2" stroke="#dcdcdc" stroke-width="1.1" fill="none"/><path d="M7.2,17 V12.5 A3.6,3.6 0 0 1 14.4,12.5 V17" stroke="#dcdcdc" stroke-width="2.2" fill="none"/></svg>
<div class="abs" style="left:1459.4px;top:0px;width:1.8px;height:940px;background:#0c0c0c;"></div>
<div class="abs" style="left:1461px;top:0px;width:457px;height:940px;background:#333333;"></div>
<div class="abs" style="left:1461px;top:0px;width:457px;height:22.8px;background:#2a2a2a;"></div>
<div class="abs" style="left:1908.3px;top:22.8px;width:9.7px;height:915px;background:#2f2e30;"></div>
<div class="abs" style="left:1461px;top:937.6px;width:457px;height:2.4px;background:#141414;"></div>
<svg width="11" height="14" viewBox="0 0 11 14" style="left:1472px;top:4px"><path d="M0,0H6.5L11,4.5V14H0Z" fill="#dcdcdc"/><path d="M6.5,0V4.5H11Z" fill="#2a2a2a"/><path d="M7.2,0.8 L10.2,3.8 H7.2Z" fill="#dcdcdc"/><path d="M1.5,7H9.5M1.5,9.5H9.5M1.5,12H9.5" stroke="#2a2a2a" stroke-width="1.1"/><path d="M3.3,6V13" stroke="#2a2a2a" stroke-width="0.7"/></svg>
<div class="t b" style="left:1491px;top:4.5px;font-size:13px;color:#e8e8e8;letter-spacing:-0.45px;letter-spacing:-0.459px">Levels - PROPERTIES</div>
<svg width="14" height="14" viewBox="0 0 14 14" style="left:1824px;top:4px"><g transform="rotate(45 7 7)"><rect x="4.2" y="0.5" width="5.6" height="2" fill="#dcdcdc"/><rect x="5" y="2" width="4" height="4.2" fill="#dcdcdc"/><path d="M2.8,8.2 L11.2,8.2 L9.6,5.8 L4.4,5.8 Z" fill="#dcdcdc"/><rect x="6.5" y="8" width="1" height="6.5" fill="#dcdcdc"/></g></svg>
<svg width="10" height="10" viewBox="0 0 10 10" style="left:1850px;top:6px"><rect x="0.6" y="0.6" width="8.8" height="8.8" fill="none" stroke="#dcdcdc" stroke-width="1.2"/><rect x="0" y="5" width="5" height="5" fill="#dcdcdc"/></svg>
<svg width="12" height="12" viewBox="0 0 12 12" style="left:1874px;top:5px"><path d="M0.6,3.5V0.6H3.5 M8.5,0.6H11.4V3.5 M11.4,8.5V11.4H8.5 M3.5,11.4H0.6V8.5" fill="none" stroke="#dcdcdc" stroke-width="1.2"/><rect x="3" y="3" width="6" height="6" fill="#dcdcdc"/></svg>
<svg width="10" height="10" viewBox="0 0 10 10" style="left:1900px;top:6px"><path d="M0,0L10,10M10,0L0,10" stroke="#dcdcdc" stroke-width="1.1"/></svg>
<div class="abs" style="left:1462px;top:23px;width:446px;height:23.8px;background:#4d4d4d;"></div>
<svg width="10" height="7" viewBox="0 0 10 7" style="left:1470px;top:32px"><path d="M0.6,0.6 L5,5.4 L9.4,0.6" fill="none" stroke="#c8c8c8" stroke-width="1.2"/></svg>
<div class="t b" style="left:1490px;top:30.8px;font-size:12.6px;color:#ececec;letter-spacing:-0.35px;letter-spacing:-0.386px">BASE PARAMETERS</div>
<div class="t b" style="left:1478px;top:56.5px;font-size:12px;color:#e4e4e4;letter-spacing:0.05px;letter-spacing:-0.142px">Output Size</div>
<svg width="20" height="16" viewBox="0 0 20 16" style="left:1852px;top:54px"><path d="M0,3 L3.2,5.5 L0,8Z" fill="#dcdcdc"/><rect x="5" y="0.6" width="10.5" height="10.5" fill="none" stroke="#dcdcdc" stroke-width="1.1"/><circle cx="9.2" cy="6" r="3.1" fill="#3d8fe0"/><rect x="11" y="8" width="5" height="4" fill="#333333"/><path d="M11.5,9.6 L14,12 L16.5,9.6" fill="none" stroke="#aaa" stroke-width="1.1"/></svg>
<svg width="15" height="12" viewBox="0 0 15 12" style="left:1883px;top:57px"><path d="M0,1H10 M0,4.5H10 M0,8H6" stroke="#dcdcdc" stroke-width="1.2"/><path d="M8.8,7.6 L11.4,10.2 L14,7.6" fill="none" stroke="#aaa" stroke-width="1.1"/></svg>
<div class="t" style="left:1478px;top:79.7px;font-size:11.5px;color:#d2d2d2;letter-spacing:-0.3px;letter-spacing:-0.259px">Width</div>
<div class="abs" style="left:1519px;top:83.7px;width:227px;height:1.2px;background:#5a5a5a;"></div>
<div class="abs" style="left:1519px;top:83.4px;width:113px;height:1.6px;background:#b4b4b4;"></div>
<div class="abs" style="left:1626.2px;top:78.4px;width:11.6px;height:11.6px;border-radius:50%;border:2.1px solid #d4d4d4;background:#333333"></div>
<div class="t" style="left:1802px;top:80px;font-size:11.5px;color:#d2d2d2;">0</div>
<div class="t" style="left:1828px;top:80px;font-size:11.5px;color:#d2d2d2;letter-spacing:0.1px;letter-spacing:0.032px">Input x 1</div>
<div class="t" style="left:1478px;top:99.7px;font-size:11.5px;color:#d2d2d2;letter-spacing:-0.3px;letter-spacing:-0.307px">Height</div>
<div class="abs" style="left:1519px;top:103.7px;width:227px;height:1.2px;background:#5a5a5a;"></div>
<div class="abs" style="left:1519px;top:103.4px;width:113px;height:1.6px;background:#b4b4b4;"></div>
<div class="abs" style="left:1626.2px;top:98.4px;width:11.6px;height:11.6px;border-radius:50%;border:2.1px solid #d4d4d4;background:#333333"></div>
<div class="t" style="left:1802px;top:100px;font-size:11.5px;color:#d2d2d2;">0</div>
<div class="t" style="left:1828px;top:100px;font-size:11.5px;color:#d2d2d2;letter-spacing:0.1px;letter-spacing:0.032px">Input x 1</div>
<div class="abs" style="left:1461px;top:120px;width:446px;height:1px;background:#2e2e2e;"></div>
<div class="t b" style="left:1478px;top:129.5px;font-size:12px;color:#e4e4e4;letter-spacing:0.05px;letter-spacing:-0.009px">Output Format</div>
<svg width="20" height="16" viewBox="0 0 20 16" style="left:1852px;top:127px"><path d="M0,3 L3.2,5.5 L0,8Z" fill="#dcdcdc"/><rect x="5" y="0.6" width="10.5" height="10.5" fill="none" stroke="#dcdcdc" stroke-width="1.1"/><circle cx="9.2" cy="6" r="3.1" fill="#3d8fe0"/><rect x="11" y="8" width="5" height="4" fill="#333333"/><path d="M11.5,9.6 L14,12 L16.5,9.6" fill="none" stroke="#aaa" stroke-width="1.1"/></svg>
<svg width="15" height="12" viewBox="0 0 15 12" style="left:1883px;top:130px"><path d="M0,1H10 M0,4.5H10 M0,8H6" stroke="#dcdcdc" stroke-width="1.2"/><path d="M8.8,7.6 L11.4,10.2 L14,7.6" fill="none" stroke="#aaa" stroke-width="1.1"/></svg>
<div class="abs" style="left:1479.5px;top:149.5px;width:426px;height:17.5px;background:#3d3d3d;border-radius:3px"></div>
<div class="t" style="left:1483.5px;top:153.5px;font-size:11px;color:#7a7a7a;letter-spacing:-0.3px;letter-spacing:-0.206px">8 Bits per Channel</div>
<svg width="10" height="6" viewBox="0 0 10 6" style="left:1890px;top:155.5px"><path d="M0.7,0.7 L5,4.8 L9.3,0.7" fill="none" stroke="#555" stroke-width="1.2"/></svg>
<div class="abs" style="left:1461px;top:175px;width:446px;height:1px;background:#2e2e2e;"></div>
<div class="t b" style="left:1478px;top:184.5px;font-size:12px;color:#e4e4e4;letter-spacing:0.05px;letter-spacing:-0.227px">Pixel Size</div>
<svg width="20" height="16" viewBox="0 0 20 16" style="left:1852px;top:182px"><path d="M0,3 L3.2,5.5 L0,8Z" fill="#dcdcdc"/><rect x="5" y="0.6" width="10.5" height="10.5" fill="none" stroke="#dcdcdc" stroke-width="1.1"/><circle cx="9.2" cy="6" r="3.1" fill="#3d8fe0"/><rect x="11" y="8" width="5" height="4" fill="#333333"/><path d="M11.5,9.6 L14,12 L16.5,9.6" fill="none" stroke="#aaa" stroke-width="1.1"/></svg>
<svg width="15" height="12" viewBox="0 0 15 12" style="left:1883px;top:185px"><path d="M0,1H10 M0,4.5H10 M0,8H6" stroke="#dcdcdc" stroke-width="1.2"/><path d="M8.8,7.6 L11.4,10.2 L14,7.6" fill="none" stroke="#aaa" stroke-width="1.1"/></svg>
<div class="t" style="left:1478px;top:207.7px;font-size:11.5px;color:#d2d2d2;letter-spacing:-0.3px;letter-spacing:-0.259px">Width</div>
<div class="abs" style="left:1519px;top:211.7px;width:296px;height:1.2px;background:#5a5a5a;"></div>
<div class="abs" style="left:1519px;top:211.39999999999998px;width:305px;height:1.6px;background:#b4b4b4;"></div>
<div class="abs" style="left:1818.2px;top:206.39999999999998px;width:11.6px;height:11.6px;border-radius:50%;border:2.1px solid #d4d4d4;background:#333333"></div>
<div class="t" style="left:1882px;top:208px;font-size:11.5px;color:#d2d2d2;">1</div>
<div class="t" style="left:1478px;top:227.7px;font-size:11.5px;color:#d2d2d2;letter-spacing:-0.3px;letter-spacing:-0.307px">Height</div>
<div class="abs" style="left:1519px;top:231.7px;width:296px;height:1.2px;background:#5a5a5a;"></div>
<div class="abs" style="left:1519px;top:231.39999999999998px;width:305px;height:1.6px;background:#b4b4b4;"></div>
<div class="abs" style="left:1818.2px;top:226.39999999999998px;width:11.6px;height:11.6px;border-radius:50%;border:2.1px solid #d4d4d4;background:#333333"></div>
<div class="t" style="left:1882px;top:228px;font-size:11.5px;color:#d2d2d2;">1</div>
<div class="abs" style="left:1461px;top:247.5px;width:446px;height:1px;background:#2e2e2e;"></div>
<div class="t b" style="left:1478px;top:257.5px;font-size:12px;color:#e4e4e4;letter-spacing:0.05px;letter-spacing:-0.123px">Pixel Ratio</div>
<svg width="20" height="16" viewBox="0 0 20 16" style="left:1852px;top:255px"><path d="M0,3 L3.2,5.5 L0,8Z" fill="#dcdcdc"/><rect x="5" y="0.6" width="10.5" height="10.5" fill="none" stroke="#dcdcdc" stroke-width="1.1"/><circle cx="9.2" cy="6" r="3.1" fill="#3d8fe0"/><rect x="11" y="8" width="5" height="4" fill="#333333"/><path d="M11.5,9.6 L14,12 L16.5,9.6" fill="none" stroke="#aaa" stroke-width="1.1"/></svg>
<svg width="15" height="12" viewBox="0 0 15 12" style="left:1883px;top:258px"><path d="M0,1H10 M0,4.5H10 M0,8H6" stroke="#dcdcdc" stroke-width="1.2"/><path d="M8.8,7.6 L11.4,10.2 L14,7.6" fill="none" stroke="#aaa" stroke-width="1.1"/></svg>
<div class="abs" style="left:1479.5px;top:277.8px;width:426px;height:17.5px;background:#3d3d3d;border-radius:3px"></div>
<div class="t" style="left:1483.5px;top:281.8px;font-size:11px;color:#7a7a7a;letter-spacing:-0.3px;letter-spacing:-0.295px">Square</div>
<svg width="10" height="6" viewBox="0 0 10 6" style="left:1890px;top:283.8px"><path d="M0.7,0.7 L5,4.8 L9.3,0.7" fill="none" stroke="#555" stroke-width="1.2"/></svg>
<div class="abs" style="left:1461px;top:302.5px;width:446px;height:1px;background:#2e2e2e;"></div>
<div class="t b" style="left:1478px;top:312.5px;font-size:12px;color:#e4e4e4;letter-spacing:0.05px;letter-spacing:-0.240px">Tiling Mode</div>
<svg width="20" height="16" viewBox="0 0 20 16" style="left:1852px;top:310px"><path d="M0,3 L3.2,5.5 L0,8Z" fill="#dcdcdc"/><rect x="5" y="0.6" width="10.5" height="10.5" fill="none" stroke="#dcdcdc" stroke-width="1.1"/><circle cx="9.2" cy="6" r="3.1" fill="#3d8fe0"/><rect x="11" y="8" width="5" height="4" fill="#333333"/><path d="M11.5,9.6 L14,12 L16.5,9.6" fill="none" stroke="#aaa" stroke-width="1.1"/></svg>
<svg width="15" height="12" viewBox="0 0 15 12" style="left:1883px;top:313px"><path d="M0,1H10 M0,4.5H10 M0,8H6" stroke="#dcdcdc" stroke-width="1.2"/><path d="M8.8,7.6 L11.4,10.2 L14,7.6" fill="none" stroke="#aaa" stroke-width="1.1"/></svg>
<div class="abs" style="left:1479.5px;top:332px;width:426px;height:17.5px;background:#3d3d3d;border-radius:3px"></div>
<div class="t" style="left:1483.5px;top:336px;font-size:11px;color:#7a7a7a;letter-spacing:-0.3px;letter-spacing:-0.335px">H and V Tiling</div>
<svg width="10" height="6" viewBox="0 0 10 6" style="left:1890px;top:338px"><path d="M0.7,0.7 L5,4.8 L9.3,0.7" fill="none" stroke="#555" stroke-width="1.2"/></svg>
<div class="abs" style="left:1461px;top:358px;width:446px;height:1px;background:#2e2e2e;"></div>
<div class="t b" style="left:1478px;top:367.5px;font-size:12px;color:#e4e4e4;letter-spacing:0.05px;letter-spacing:-0.174px">Random Seed</div>
<svg width="20" height="16" viewBox="0 0 20 16" style="left:1852px;top:365px"><path d="M0,3 L3.2,5.5 L0,8Z" fill="#dcdcdc"/><rect x="5" y="0.6" width="10.5" height="10.5" fill="none" stroke="#dcdcdc" stroke-width="1.1"/><circle cx="9.2" cy="6" r="3.1" fill="#3d8fe0"/><rect x="11" y="8" width="5" height="4" fill="#333333"/><path d="M11.5,9.6 L14,12 L16.5,9.6" fill="none" stroke="#aaa" stroke-width="1.1"/></svg>
<svg width="15" height="12" viewBox="0 0 15 12" style="left:1883px;top:368px"><path d="M0,1H10 M0,4.5H10 M0,8H6" stroke="#dcdcdc" stroke-width="1.2"/><path d="M8.8,7.6 L11.4,10.2 L14,7.6" fill="none" stroke="#aaa" stroke-width="1.1"/></svg>
<div class="abs" style="left:1492px;top:394.5px;width:333px;height:1.2px;background:#5a5a5a;"></div>
<div class="abs" style="left:1479.2px;top:389.2px;width:11.6px;height:11.6px;border-radius:50%;border:2.1px solid #d4d4d4;background:#333333"></div>
<div class="t" style="left:1881px;top:390px;font-size:11.5px;color:#d2d2d2;">0</div>
<div class="abs" style="left:1462px;top:412px;width:446px;height:23.8px;background:#4d4d4d;"></div>
<svg width="10" height="7" viewBox="0 0 10 7" style="left:1470px;top:421px"><path d="M0.6,0.6 L5,5.4 L9.4,0.6" fill="none" stroke="#c8c8c8" stroke-width="1.2"/></svg>
<div class="t b" style="left:1490px;top:419.8px;font-size:12.6px;color:#ececec;letter-spacing:-0.35px;letter-spacing:-0.310px">SPECIFIC PARAMETERS</div>
<svg width="16" height="16" viewBox="0 0 16 16" style="left:1832px;top:416px"><rect x="0.7" y="0.7" width="14.6" height="14.6" fill="none" stroke="#dcdcdc" stroke-width="1.3"/><path d="M3,13 L13,3" stroke="#dcdcdc" stroke-width="1.1"/><path d="M5,10.5 C5,6 8,4.5 11.5,4.5 C11.5,8.5 10,11.5 5,10.5Z" fill="#dcdcdc"/></svg>
<svg width="18" height="16" viewBox="0 0 18 16" style="left:1858px;top:416px"><path d="M4,1V15 M14,1V15" stroke="#dcdcdc" stroke-width="1.2"/><path d="M5,15 L7.5,9 L9,4 L10.5,9 L13,15Z" fill="#dcdcdc"/><path d="M0,2.5 L2.4,4.5 L0,6.5Z M18,2.5 L15.6,4.5 L18,6.5Z" fill="#dcdcdc"/></svg>
<svg width="16" height="16" viewBox="0 0 16 16" style="left:1886px;top:416px"><path d="M0,3H16 M0,8H16 M0,13H16" stroke="#dcdcdc" stroke-width="1.2"/><rect x="9" y="0.8" width="2.6" height="4.4" fill="#dcdcdc"/><rect x="3" y="5.8" width="2.6" height="4.4" fill="#dcdcdc"/><rect x="10.5" y="10.8" width="2.6" height="4.4" fill="#dcdcdc"/></svg>
<div class="t b" style="left:1489px;top:454.5px;font-size:12px;color:#e4e4e4;letter-spacing:0.05px;letter-spacing:-0.127px">Levels Histogram</div>
<div class="abs" style="left:1490px;top:472px;width:403px;height:18px;background:#2a2a2a;border:1px solid #484848;border-radius:3px"></div>
<div class="abs" style="left:1494.5px;top:473.5px;width:23.5px;height:15px;background:linear-gradient(to right,#161616,#f0f0f0);"></div>
<div class="t" style="left:1524px;top:476.8px;font-size:11.5px;color:#dcdcdc;letter-spacing:-0.3px;letter-spacing:-0.570px">Luminance Channel</div>
<svg width="10" height="6" viewBox="0 0 10 6" style="left:1879px;top:478px"><path d="M0.7,0.7 L5,4.8 L9.3,0.7" fill="none" stroke="#d0d0d0" stroke-width="1.4"/></svg>
<svg width="21" height="11" viewBox="0 0 21 11" style="left:1660px;top:500px"><path d="M0.6,0.8 H14.4 V3.6 L7.5,10.3 L0.6,3.6Z" fill="#1a1a1a" stroke="#e0e0e0" stroke-width="0.9"/><path d="M5.6,1.3 H19.4 V4 L12.5,10.4 L5.6,4Z" fill="#8a8a8a" stroke="#1a1a1a" stroke-width="0.9"/></svg>
<svg width="15" height="11" viewBox="0 0 15 11" style="left:1755px;top:500px"><path d="M0.6,0.8 H14.4 V3.6 L7.5,10.3 L0.6,3.6Z" fill="#fff" stroke="#1a1a1a" stroke-width="0.9"/></svg>
<svg width="389" height="160" viewBox="0 0 389 160" style="left:1497px;top:515px"><defs><pattern id="hatch" width="8" height="8" patternUnits="userSpaceOnUse"><rect width="8" height="8" fill="#d8d8d8"/><path d="M-1,9 L9,-1 M-1,1 L1,-1 M7,9 L9,7" stroke="#9e9e9e" stroke-width="0.75"/></pattern></defs><rect width="389" height="160" fill="#d2d2d2"/><rect x="265.5" y="0" width="123.5" height="145" fill="url(#hatch)"/><path d="M0,145 L0,145.0 L1,145.0 L2,145.0 L3,145.0 L4,145.0 L5,145.0 L6,145.0 L7,145.0 L8,145.0 L9,145.0 L10,145.0 L11,145.0 L12,145.0 L13,145.0 L14,145.0 L15,145.0 L16,145.0 L17,145.0 L18,145.0 L19,145.0 L20,145.0 L21,145.0 L22,145.0 L23,145.0 L24,145.0 L25,145.0 L26,145.0 L27,145.0 L28,145.0 L29,145.0 L30,145.0 L31,145.0 L32,145.0 L33,145.0 L34,145.0 L35,145.0 L36,145.0 L37,145.0 L38,145.0 L39,145.0 L40,145.0 L41,145.0 L42,145.0 L43,145.0 L44,145.0 L45,145.0 L46,145.0 L47,145.0 L48,145.0 L49,145.0 L50,145.0 L51,145.0 L52,145.0 L53,145.0 L54,145.0 L55,145.0 L56,145.0 L57,145.0 L58,145.0 L59,145.0 L60,145.0 L61,145.0 L62,145.0 L63,145.0 L64,145.0 L65,145.0 L66,145.0 L67,145.0 L68,145.0 L69,145.0 L70,145.0 L71,145.0 L72,145.0 L73,145.0 L74,145.0 L75,145.0 L76,145.0 L77,145.0 L78,145.0 L79,145.0 L80,145.0 L81,145.0 L82,145.0 L83,145.0 L84,145.0 L85,145.0 L86,144.6 L87,144.6 L88,144.6 L89,144.6 L90,144.5 L91,144.5 L92,144.5 L93,144.5 L94,144.4 L95,144.4 L96,144.4 L97,144.4 L98,144.3 L99,144.3 L100,144.3 L101,144.2 L102,144.2 L103,144.2 L104,144.1 L105,144.1 L106,144.1 L107,144.0 L108,144.0 L109,143.9 L110,143.9 L111,143.8 L112,143.8 L113,143.8 L114,143.7 L115,143.7 L116,143.6 L117,143.6 L118,143.5 L119,143.5 L120,143.4 L121,143.4 L122,143.3 L123,143.3 L124,143.2 L125,143.2 L126,143.1 L127,143.1 L128,143.0 L129,142.9 L130,142.9 L131,142.8 L132,142.8 L133,142.7 L134,142.7 L135,142.6 L136,142.5 L137,142.5 L138,142.4 L139,142.3 L140,142.3 L141,142.2 L142,142.2 L143,142.1 L144,142.0 L145,142.0 L146,141.9 L147,141.8 L148,141.8 L149,141.7 L150,141.6 L151,141.6 L152,141.5 L153,141.4 L154,141.3 L155,141.3 L156,141.2 L157,141.1 L158,141.1 L159,141.0 L160,140.9 L161,140.8 L162,140.8 L163,140.7 L164,140.6 L165,140.5 L166,140.4 L167,140.3 L168,140.2 L169,140.1 L170,140.0 L171,139.9 L172,139.8 L173,139.6 L174,139.5 L175,139.3 L176,139.1 L177,138.9 L178,138.6 L179,138.3 L180,137.9 L181,137.4 L182,136.9 L183,136.3 L184,135.6 L185,134.8 L186,133.8 L187,132.7 L188,131.4 L189,130.0 L190,128.3 L191,126.4 L192,124.2 L193,121.8 L194,119.0 L195,116.0 L196,112.6 L197,109.0 L198,105.0 L199,100.6 L200,96.0 L201,91.0 L202,85.8 L203,80.3 L204,74.6 L205,68.7 L206,62.6 L207,56.5 L208,50.3 L209,44.2 L210,38.2 L211,32.4 L212,26.9 L213,21.7 L214,17.0 L215,12.7 L216,8.9 L217,5.8 L218,3.3 L219,1.5 L220,0.4 L221,0.0 L222,0.4 L223,1.7 L224,3.9 L225,6.8 L226,10.6 L227,15.0 L228,20.0 L229,25.5 L230,31.5 L231,37.9 L232,44.5 L233,51.3 L234,58.2 L235,65.0 L236,71.8 L237,78.4 L238,84.8 L239,90.9 L240,96.7 L241,102.2 L242,107.2 L243,111.9 L244,116.1 L245,120.0 L246,123.5 L247,126.6 L248,129.3 L249,131.7 L250,133.9 L251,135.7 L252,137.3 L253,138.6 L254,139.7 L255,140.7 L256,141.5 L257,142.2 L258,142.7 L259,143.2 L260,143.5 L261,143.8 L262,144.1 L263,144.3 L264,144.4 L265,144.5 L266,145Z" fill="#868686"/><rect x="0" y="144.6" width="389" height="0.9" fill="#a8a8a8"/><rect x="265" y="0" width="1" height="145" fill="#9a9a9a"/><rect x="0" y="138" width="1.2" height="7" fill="#888"/><text x="3" y="157" font-size="10.5" fill="#b4b4b4" font-family="Liberation Sans,sans-serif">0</text><text x="386" y="157" font-size="10.5" fill="#b4b4b4" text-anchor="end" font-family="Liberation Sans,sans-serif">65535</text></svg>
<div class="abs" style="left:1497px;top:679px;width:389px;height:1.2px;background:#e8e8e8;"></div>
<svg width="15" height="10" viewBox="0 0 15 10" style="left:1490px;top:680px"><path d="M7.5,0.8 L14.2,9.2 H0.8Z" fill="#0c0c0c" stroke="#e8e8e8" stroke-width="1"/></svg>
<svg width="15" height="10" viewBox="0 0 15 10" style="left:1878px;top:680px"><path d="M7.5,0.8 L14.2,9.2 H0.8Z" fill="#fff" stroke="#ddd" stroke-width="0.6"/></svg>
<div class="abs" style="left:1462px;top:711px;width:446px;height:23.8px;background:#4d4d4d;"></div>
<svg width="10" height="7" viewBox="0 0 10 7" style="left:1470px;top:720px"><path d="M0.6,0.6 L5,5.4 L9.4,0.6" fill="none" stroke="#5a5a5a" stroke-width="1.2"/></svg>
<div class="t b" style="left:1490px;top:718.8px;font-size:12.6px;color:#ececec;letter-spacing:-0.35px;letter-spacing:-0.390px">INPUT VALUES</div>
<svg width="10" height="10" viewBox="0 0 10 10" style="left:1889px;top:718.5px"><circle cx="5" cy="5" r="5" fill="#dcdcdc"/><path d="M5,2V8M2,5H8" stroke="#444" stroke-width="1.4"/></svg>
<svg width="160" height="230" viewBox="1760 700 160 230" style="left:1760px;top:700px" opacity="0.26"><text x="1776.3" y="812.8" font-size="145" font-weight="bold" fill="#fff" font-family="Liberation Sans,sans-serif" textLength="111" lengthAdjust="spacingAndGlyphs">G</text><g fill="#fff"><rect x="1775" y="812.8" width="113" height="6.4"/><path d="M1822.5,819 L1848,819 L1891.5,917.5 L1906.5,917.5 L1906.5,924 L1869,924 L1835,850.6 L1801,924 L1764,924 L1764,917.5 L1780,917.5Z"/></g></svg>
<div class="abs" style="left:0px;top:517px;width:1459.5px;height:2px;background:#0c0c0c;"></div>
<div class="abs" style="left:0px;top:519px;width:1459.5px;height:2px;background:#1d1d1f;"></div>
<div class="abs" style="left:0px;top:518.8px;width:156px;height:2.4px;background:#2c78d4;"></div>
<div class="abs" style="left:0px;top:521px;width:156px;height:30px;background:#2d2d2d;"></div>
<div class="abs" style="left:156px;top:520px;width:162.5px;height:31px;background:#1d1d1d;"></div>
<div class="abs" style="left:0px;top:551px;width:318.5px;height:27px;background:#323232;"></div>
<div class="abs" style="left:318.3px;top:518.8px;width:1.8px;height:421px;background:#0e0e0e;"></div>
<svg width="19" height="15" viewBox="0 0 19 15" style="left:3px;top:529px"><path d="M0,1.5 Q0,0.5 1,0.5 H6 L8,2.5 H14 Q15,2.5 15,3.5 V5 H4 L0,13Z" fill="#dcdcdc"/><path d="M4.5,6 H19 L15.5,14.5 H0.8Z" fill="#dcdcdc"/></svg>
<div class="t" style="left:34px;top:531px;font-size:12px;color:#e0e0e0;letter-spacing:-0.3px;letter-spacing:-0.526px">Library</div>
<svg width="10" height="10" viewBox="0 0 10 10" style="left:86px;top:531px"><rect x="0.6" y="0.6" width="8.8" height="8.8" fill="none" stroke="#dcdcdc" stroke-width="1.2"/><rect x="0" y="5" width="5" height="5" fill="#dcdcdc"/></svg>
<svg width="12" height="12" viewBox="0 0 12 12" style="left:109px;top:530px"><path d="M0.6,3.5V0.6H3.5 M8.5,0.6H11.4V3.5 M11.4,8.5V11.4H8.5 M3.5,11.4H0.6V8.5" fill="none" stroke="#dcdcdc" stroke-width="1.2"/><rect x="3" y="3" width="6" height="6" fill="#dcdcdc"/></svg>
<svg width="10" height="10" viewBox="0 0 10 10" style="left:134px;top:531px"><path d="M0,0L10,10M10,0L0,10" stroke="#dcdcdc" stroke-width="1.1"/></svg>
<svg width="12" height="12" viewBox="0 0 12 12" style="left:165px;top:530px"><rect x="0" y="0" width="5" height="3.6" fill="#dcdcdc"/><rect x="5.5" y="4.2" width="6" height="3.2" fill="#dcdcdc"/><rect x="5.5" y="8.6" width="6" height="3.2" fill="#dcdcdc"/><path d="M2.5,3V10.2H6 M2.5,5.8H6" fill="none" stroke="#dcdcdc" stroke-width="1.1"/></svg>
<div class="t" style="left:192px;top:531px;font-size:12px;color:#e0e0e0;letter-spacing:-0.3px;letter-spacing:-0.611px">Explorer</div>
<svg width="10" height="10" viewBox="0 0 10 10" style="left:250.5px;top:530.5px"><path d="M0,0L10,10M10,0L0,10" stroke="#dcdcdc" stroke-width="1.1"/></svg>
<svg width="16" height="14" viewBox="0 0 16 14" style="left:4px;top:557px"><path d="M0,0H5.5L7,2H13V6.5H9.5V12.5H0Z" fill="#dcdcdc"/><path d="M12.5,8V14M9.5,11H15.5" stroke="#dcdcdc" stroke-width="1.7"/></svg>
<svg width="16" height="14" viewBox="0 0 16 14" style="left:32px;top:557px"><path d="M6.5,0.3 A6.3,6.3 0 1 0 8.3,12.5 V8.2 H12.6 A6.3,6.3 0 0 0 6.5,0.3Z" fill="#5c5c5c"/><path d="M12,8.5V14M9.3,11.2H14.7" stroke="#5c5c5c" stroke-width="1.7"/></svg>
<svg width="16" height="16" viewBox="0 0 16 16" style="left:60px;top:556px"><path d="M0.5,15.5 L1.6,11.2 L10,2.8 L13.2,6 L4.8,14.4Z" fill="#dcdcdc"/><path d="M11,1.8 L12.4,0.5 L15.5,3.6 L14.2,5Z" fill="#dcdcdc"/></svg>
<div class="abs" style="left:119px;top:551px;width:2px;height:27px;background:#161616;"></div>
<div class="abs" style="left:119px;top:578px;width:2px;height:340px;background:#161616;"></div>
<div class="abs" style="left:124.5px;top:552px;width:1px;height:25px;background:#1c1c1c;"></div>
<div class="abs" style="left:127px;top:552px;width:1px;height:25px;background:#1c1c1c;"></div>
<div class="abs" style="left:137px;top:555.5px;width:107.5px;height:18.5px;background:#232323;border:1px solid #484848;border-radius:3px"></div>
<div class="t" style="left:143px;top:559px;font-size:11.5px;color:#e0e0e0;letter-spacing:-0.2px;letter-spacing:-0.490px">Search</div>
<svg width="16" height="14" viewBox="0 0 16 14" style="left:253px;top:557px"><path d="M0,0H12.5V1.6L7.8,6.6V12.5L4.7,10.5V6.6L0,1.6Z" fill="#dcdcdc"/><path d="M10.2,10.2 L12.6,12.6 L15,10.2" fill="none" stroke="#aaa" stroke-width="1.1"/></svg>
<svg width="16" height="15" viewBox="0 0 16 15" style="left:282px;top:556px"><path d="M6.5,0 L8.4,4.3 L13,4.8 L9.6,7.9 L10.5,12.4 L6.5,10.1 L2.5,12.4 L3.4,7.9 L0,4.8 L4.6,4.3Z" fill="#5c5c5c"/><path d="M12.5,8.5V14.5M9.5,11.5H15.5" stroke="#5c5c5c" stroke-width="1.7"/></svg>
<div class="t" style="left:306px;top:555.5px;font-size:15px;color:#c0c0c0;">»</div>
<div class="abs" style="left:0px;top:578px;width:108px;height:340px;background:#333333;"></div>
<div class="abs" style="left:108px;top:578px;width:11px;height:340px;background:#2c2c2c;"></div>
<div class="abs" style="left:108.5px;top:578px;width:9px;height:43.5px;background:#4a4a4a;"></div>
<div class="abs" style="left:121px;top:578px;width:197.5px;height:340px;background:#262626;"></div>
<div class="abs" style="left:0;top:578px;width:108px;height:340px;overflow:hidden">
<div class="abs" style="left:-2px;top:0.5px;width:109.5px;height:21.5px;background:#3e3e3e;border:1.5px solid #2f72c4;border-radius:3px"></div>
<div class="t" style="left:24px;top:5.5px;font-size:12px;color:#f0f0f0;;letter-spacing:-0.339px">Favorites</div>
<svg width="15" height="14" viewBox="0 0 15 14" style="left:2.5px;top:3.5px"><path d="M7.5,0 L9.6,4.7 L14.8,5.2 L10.9,8.7 L12,13.8 L7.5,11.2 L3,13.8 L4.1,8.7 L0.2,5.2 L5.4,4.7Z" fill="#f5b921"/></svg>
<div class="abs" style="left:0px;top:43px;width:108px;height:1px;background:#2b2b2b"></div>
<div class="t" style="left:24px;top:27.5px;font-size:12px;color:#cfcfcf;;letter-spacing:-0.211px">Graph Items</div>
<svg width="14" height="13" viewBox="0 0 14 13" style="left:3px;top:26.5px"><path d="M1.5,0H12.5Q14,0 14,1.5V7.5Q14,9 12.5,9H9.5L9,12.5L6,9H1.5Q0,9 0,7.5V1.5Q0,0 1.5,0Z" fill="#dcdcdc"/></svg>
<div class="abs" style="left:0px;top:65px;width:108px;height:1px;background:#2b2b2b"></div>
<div class="t" style="left:24px;top:49.5px;font-size:12px;color:#cfcfcf;;letter-spacing:0.075px">Atomic Nodes</div>
<svg width="16" height="16" viewBox="0 0 16 16" style="left:2px;top:47px"><g fill="#dcdcdc"><rect x="0" y="5" width="6" height="5.5"/><rect x="10" y="0" width="6" height="5.5"/><rect x="10" y="10" width="6" height="5.5"/></g><path d="M5.5,7.8 L10.5,2.8 M5.5,7.8 L10.5,12.8" stroke="#dcdcdc" stroke-width="1.2"/></svg>
<div class="abs" style="left:0px;top:87px;width:108px;height:1px;background:#2b2b2b"></div>
<div class="t" style="left:24px;top:71.5px;font-size:12px;color:#cfcfcf;;letter-spacing:-0.182px">FxMap Nodes</div>
<svg width="15" height="15" viewBox="0 0 15 15" style="left:2px;top:69.5px"><g fill="#dcdcdc"><rect x="0" y="0" width="3.2" height="3.2"/><rect x="4.2" y="0" width="3.2" height="3.2"/><rect x="0" y="4.2" width="3.2" height="3.2"/><rect x="4.2" y="4.2" width="3.2" height="3.2"/><rect x="8.5" y="0" width="6.5" height="7.4"/><rect x="0" y="8.5" width="7.4" height="6.5"/><rect x="8.5" y="8.5" width="6.5" height="6.5"/></g></svg>
<div class="abs" style="left:0px;top:109px;width:108px;height:1px;background:#2b2b2b"></div>
<div class="t b" style="left:24px;top:93.5px;font-size:12px;color:#f0f0f0;;letter-spacing:-0.192px">Function No...</div>
<svg width="10" height="7" viewBox="0 0 10 7" style="left:5.5px;top:95.5px"><path d="M0.6,0.6 L5,5.2 L9.4,0.6" fill="none" stroke="#c8c8c8" stroke-width="1.2"/></svg>
<div class="abs" style="left:19px;top:131px;width:89px;height:1px;background:#2b2b2b"></div>
<div class="abs" style="left:19px;top:110px;width:89px;height:21px;background:#363636"></div>
<div class="t" style="left:44px;top:115.5px;font-size:12px;color:#cfcfcf;;letter-spacing:-0.066px">Constant</div>
<svg width="14" height="14" viewBox="0 0 14 14" style="left:23px;top:114px"><rect width="14" height="14" rx="2.5" fill="#dcdcdc"/><path d="M3.2,11.5 C3.2,7.5 5.5,6 8,6 V3.5 L11.8,7 L8,10.5 V8.3 C6,8.3 4.5,9 3.2,11.5Z" fill="#333"/></svg>
<div class="abs" style="left:19px;top:153px;width:89px;height:1px;background:#2b2b2b"></div>
<div class="abs" style="left:19px;top:132px;width:89px;height:21px;background:#363636"></div>
<div class="t" style="left:44px;top:137.5px;font-size:12px;color:#cfcfcf;;letter-spacing:-0.287px">Vector</div>
<svg width="14" height="14" viewBox="0 0 14 14" style="left:23px;top:136px"><rect width="14" height="14" rx="2.5" fill="#dcdcdc"/><path d="M3.2,11.5 C3.2,7.5 5.5,6 8,6 V3.5 L11.8,7 L8,10.5 V8.3 C6,8.3 4.5,9 3.2,11.5Z" fill="#333"/></svg>
<div class="abs" style="left:19px;top:175px;width:89px;height:1px;background:#2b2b2b"></div>
<div class="abs" style="left:19px;top:154px;width:89px;height:21px;background:#363636"></div>
<div class="t" style="left:44px;top:159.5px;font-size:12px;color:#cfcfcf;;letter-spacing:-0.382px">Variables</div>
<svg width="14" height="14" viewBox="0 0 14 14" style="left:23px;top:158px"><rect width="14" height="14" rx="2.5" fill="#dcdcdc"/><path d="M3.2,11.5 C3.2,7.5 5.5,6 8,6 V3.5 L11.8,7 L8,10.5 V8.3 C6,8.3 4.5,9 3.2,11.5Z" fill="#333"/></svg>
<div class="abs" style="left:19px;top:197px;width:89px;height:1px;background:#2b2b2b"></div>
<div class="abs" style="left:19px;top:176px;width:89px;height:21px;background:#363636"></div>
<div class="t" style="left:44px;top:181.5px;font-size:12px;color:#cfcfcf;;letter-spacing:-0.348px">Samplers</div>
<svg width="14" height="14" viewBox="0 0 14 14" style="left:23px;top:180px"><rect width="14" height="14" rx="2.5" fill="#dcdcdc"/><path d="M3.2,11.5 C3.2,7.5 5.5,6 8,6 V3.5 L11.8,7 L8,10.5 V8.3 C6,8.3 4.5,9 3.2,11.5Z" fill="#333"/></svg>
<div class="abs" style="left:19px;top:219px;width:89px;height:1px;background:#2b2b2b"></div>
<div class="abs" style="left:19px;top:198px;width:89px;height:21px;background:#363636"></div>
<div class="t" style="left:44px;top:203.5px;font-size:12px;color:#cfcfcf;;letter-spacing:-0.519px">Cast</div>
<svg width="14" height="14" viewBox="0 0 14 14" style="left:23px;top:202px"><rect width="14" height="14" rx="2.5" fill="#dcdcdc"/><path d="M3.2,11.5 C3.2,7.5 5.5,6 8,6 V3.5 L11.8,7 L8,10.5 V8.3 C6,8.3 4.5,9 3.2,11.5Z" fill="#333"/></svg>
<div class="abs" style="left:19px;top:241px;width:89px;height:1px;background:#2b2b2b"></div>
<div class="abs" style="left:19px;top:220px;width:89px;height:21px;background:#363636"></div>
<div class="t" style="left:44px;top:225.5px;font-size:12px;color:#cfcfcf;;letter-spacing:-0.045px">Operator</div>
<svg width="14" height="14" viewBox="0 0 14 14" style="left:23px;top:224px"><rect width="14" height="14" rx="2.5" fill="#dcdcdc"/><path d="M3.2,11.5 C3.2,7.5 5.5,6 8,6 V3.5 L11.8,7 L8,10.5 V8.3 C6,8.3 4.5,9 3.2,11.5Z" fill="#333"/></svg>
<div class="abs" style="left:19px;top:263px;width:89px;height:1px;background:#2b2b2b"></div>
<div class="abs" style="left:19px;top:242px;width:89px;height:21px;background:#363636"></div>
<div class="t" style="left:44px;top:247.5px;font-size:12px;color:#cfcfcf;;letter-spacing:-0.076px">Logical</div>
<svg width="14" height="14" viewBox="0 0 14 14" style="left:23px;top:246px"><rect width="14" height="14" rx="2.5" fill="#dcdcdc"/><path d="M3.2,11.5 C3.2,7.5 5.5,6 8,6 V3.5 L11.8,7 L8,10.5 V8.3 C6,8.3 4.5,9 3.2,11.5Z" fill="#333"/></svg>
<div class="abs" style="left:19px;top:285px;width:89px;height:1px;background:#2b2b2b"></div>
<div class="abs" style="left:19px;top:264px;width:89px;height:21px;background:#363636"></div>
<div class="t" style="left:44px;top:269.5px;font-size:12px;color:#cfcfcf;;letter-spacing:-0.115px">Compari...</div>
<svg width="14" height="14" viewBox="0 0 14 14" style="left:23px;top:268px"><rect width="14" height="14" rx="2.5" fill="#dcdcdc"/><path d="M3.2,11.5 C3.2,7.5 5.5,6 8,6 V3.5 L11.8,7 L8,10.5 V8.3 C6,8.3 4.5,9 3.2,11.5Z" fill="#333"/></svg>
<div class="abs" style="left:19px;top:307px;width:89px;height:1px;background:#2b2b2b"></div>
<div class="abs" style="left:19px;top:286px;width:89px;height:21px;background:#363636"></div>
<div class="t" style="left:44px;top:291.5px;font-size:12px;color:#cfcfcf;;letter-spacing:0.009px">Function</div>
<svg width="14" height="14" viewBox="0 0 14 14" style="left:23px;top:290px"><rect width="14" height="14" rx="2.5" fill="#dcdcdc"/><path d="M3.2,11.5 C3.2,7.5 5.5,6 8,6 V3.5 L11.8,7 L8,10.5 V8.3 C6,8.3 4.5,9 3.2,11.5Z" fill="#333"/></svg>
<div class="abs" style="left:19px;top:329px;width:89px;height:1px;background:#2b2b2b"></div>
<div class="abs" style="left:19px;top:308px;width:89px;height:21px;background:#363636"></div>
<div class="t" style="left:44px;top:313.5px;font-size:12px;color:#cfcfcf;;letter-spacing:0.159px">Control</div>
<svg width="14" height="14" viewBox="0 0 14 14" style="left:23px;top:312px"><rect width="14" height="14" rx="2.5" fill="#dcdcdc"/><path d="M3.2,11.5 C3.2,7.5 5.5,6 8,6 V3.5 L11.8,7 L8,10.5 V8.3 C6,8.3 4.5,9 3.2,11.5Z" fill="#333"/></svg>
<div class="t b" style="left:24px;top:335.5px;font-size:12px;color:#f0f0f0">Texture G...</div>
<svg width="10" height="7" viewBox="0 0 10 7" style="left:5.5px;top:337.5px"><path d="M0.6,0.6 L5,5.2 L9.4,0.6" fill="none" stroke="#c8c8c8" stroke-width="1.2"/></svg>
</div>
<div class="abs" style="left:0px;top:918px;width:318.5px;height:20px;background:#323232;"></div>
<div class="abs" style="left:189px;top:921px;width:128px;height:15px;background:#484848;"></div>
<div class="abs" style="left:0px;top:938px;width:1459px;height:2px;background:#1e1e1e;"></div>
<div class="abs" style="left:320px;top:518.8px;width:580.5px;height:46.2px;background:#2b2b2c;"></div>
<div class="abs" style="left:320px;top:565px;width:30px;height:346px;background:#2b2b2c;"></div>
<div class="abs" style="left:320px;top:911px;width:580.5px;height:27px;background:#2b2b2c;"></div>
<div class="abs" style="left:900.4px;top:518.8px;width:1.8px;height:421px;background:#0e0e0e;"></div>
<svg width="15" height="16" viewBox="0 0 15 16" style="left:327px;top:523.5px"><path d="M7.5,0 L15,3.6 V12 L7.5,16 L0,12 V3.6Z" fill="#dcdcdc"/><path d="M0.8,4.2 L7.5,7.6 L14.2,4.2 M7.5,7.6 V15.3" stroke="#2b2b2c" stroke-width="1.3" fill="none"/></svg>
<div class="t b" style="left:350px;top:524.5px;font-size:13px;color:#e8e8e8;letter-spacing:-0.3px;letter-spacing:-0.130px">Rounded Cube - OpenGL - 3D VIEW</div>
<svg width="14" height="14" viewBox="0 0 14 14" style="left:806px;top:524px"><g transform="rotate(45 7 7)"><rect x="4.2" y="0.5" width="5.6" height="2" fill="#dcdcdc"/><rect x="5" y="2" width="4" height="4.2" fill="#dcdcdc"/><path d="M2.8,8.2 L11.2,8.2 L9.6,5.8 L4.4,5.8 Z" fill="#dcdcdc"/><rect x="6.5" y="8" width="1" height="6.5" fill="#dcdcdc"/></g></svg>
<svg width="10" height="10" viewBox="0 0 10 10" style="left:832px;top:526px"><rect x="0.6" y="0.6" width="8.8" height="8.8" fill="none" stroke="#dcdcdc" stroke-width="1.2"/><rect x="0" y="5" width="5" height="5" fill="#dcdcdc"/></svg>
<svg width="12" height="12" viewBox="0 0 12 12" style="left:856px;top:525px"><path d="M0.6,3.5V0.6H3.5 M8.5,0.6H11.4V3.5 M11.4,8.5V11.4H8.5 M3.5,11.4H0.6V8.5" fill="none" stroke="#dcdcdc" stroke-width="1.2"/><rect x="3" y="3" width="6" height="6" fill="#dcdcdc"/></svg>
<svg width="10" height="10" viewBox="0 0 10 10" style="left:882px;top:526px"><path d="M0,0L10,10M10,0L0,10" stroke="#dcdcdc" stroke-width="1.1"/></svg>
<div class="t" style="left:331px;top:549.5px;font-size:11.5px;color:#d2d2d2;letter-spacing:-0.1px;letter-spacing:-0.642px">Scene</div>
<div class="t" style="left:381px;top:549.5px;font-size:11.5px;color:#d2d2d2;letter-spacing:-0.1px;letter-spacing:-0.061px">Materials</div>
<div class="t" style="left:448px;top:549.5px;font-size:11.5px;color:#d2d2d2;letter-spacing:-0.1px;letter-spacing:-0.065px">Lights</div>
<div class="t" style="left:499px;top:549.5px;font-size:11.5px;color:#d2d2d2;letter-spacing:-0.1px;letter-spacing:-0.567px">Camera</div>
<div class="t" style="left:557px;top:549.5px;font-size:11.5px;color:#d2d2d2;letter-spacing:-0.1px;letter-spacing:0.004px">Environment</div>
<div class="t" style="left:642px;top:549.5px;font-size:11.5px;color:#d2d2d2;letter-spacing:-0.1px;letter-spacing:-0.087px">Display</div>
<div class="t" style="left:699px;top:549.5px;font-size:11.5px;color:#d2d2d2;letter-spacing:-0.1px;letter-spacing:-0.168px">Renderer</div>
<div class="abs" style="left:322px;top:572.3px;width:27px;height:1px;background:#1a1a1a;"></div>
<div class="abs" style="left:322px;top:574.8px;width:27px;height:1px;background:#1a1a1a;"></div>
<div class="abs" style="left:322px;top:582.5px;width:27px;height:24px;background:#4d4d4d;border-radius:3px"></div>
<svg width="17" height="11" viewBox="0 0 17 11" style="left:327.5px;top:589px"><rect x="0" y="0" width="11.5" height="11" rx="1.5" fill="#dcdcdc"/><path d="M12,3.6 L17,0.8 V10.2 L12,7.4Z" fill="#dcdcdc"/></svg>
<svg width="11" height="17" viewBox="0 0 11 17" style="left:329.5px;top:610px"><path d="M5.5,0 A5.5,5.5 0 0 1 8.6,10 V12 H2.4 V10 A5.5,5.5 0 0 1 5.5,0Z" fill="#dcdcdc"/><rect x="2.8" y="13" width="5.4" height="1.4" fill="#dcdcdc"/><rect x="3.6" y="15.2" width="3.8" height="1.4" fill="#dcdcdc"/><path d="M2.6,5 Q3,2.6 5.2,2.3" stroke="#2b2b2b" stroke-width="0.9" fill="none"/></svg>
<svg width="12" height="12" viewBox="0 0 12 12" style="left:329px;top:892px"><rect x="0" y="0" width="5" height="3.6" fill="#dcdcdc"/><rect x="5.5" y="4.2" width="6" height="3.2" fill="#dcdcdc"/><rect x="5.5" y="8.6" width="6" height="3.2" fill="#dcdcdc"/><path d="M2.5,3V10.2H6 M2.5,5.8H6" fill="none" stroke="#dcdcdc" stroke-width="1.1"/></svg>
<div class="abs" style="left:326px;top:912px;width:1px;height:25px;background:#1c1c1c;"></div>
<div class="abs" style="left:328.5px;top:912px;width:1px;height:25px;background:#1c1c1c;"></div>
<svg width="20" height="16" viewBox="0 0 20 16" style="left:340px;top:916px"><path d="M7.5,6.5 L15,10 L7.5,13.5 L0,10Z" fill="#3d8fe0"/><path d="M7.5,3.5 L15,7 L7.5,10.5 L0,7Z" fill="#3cb45a" stroke="#2b2b2b" stroke-width="0.6"/><path d="M7.5,0.5 L15,4 L7.5,7.5 L0,4Z" fill="#e04a3a" stroke="#2b2b2b" stroke-width="0.6"/><path d="M14,12 L16.4,14.4 L18.8,12" fill="none" stroke="#aaa" stroke-width="1.1"/></svg>
<div class="abs" style="left:364px;top:915px;width:121px;height:19px;background:#232323;border:1px solid #484848;border-radius:3px"></div>
<div class="t" style="left:368.5px;top:919px;font-size:11.5px;color:#dcdcdc;letter-spacing:-0.25px;letter-spacing:-0.432px">sRGB (default)</div>
<svg width="10" height="6" viewBox="0 0 10 6" style="left:471px;top:921.5px"><path d="M0.7,0.7 L5,4.8 L9.3,0.7" fill="none" stroke="#d0d0d0" stroke-width="1.4"/></svg>
<div class="abs" style="left:350px;top:565px;width:550px;height:346px;overflow:hidden;filter:saturate(0.82);background:#c0cfd2">
<svg width="550" height="346" viewBox="350 565 550 346" style="left:0;top:0"><rect x="350" y="780" width="550" height="131" fill="#c3cdcb"/><g fill="#447891"><path d="M657.3,798 L700.0,798 L594.4,912.5 L550.2,912.5Z"/><path d="M703.2,798 L748.5,798 L867.0,912.5 L817.8,912.5Z"/><path d="M702.1,808.7 L806.9,912.5 L761.6,912.5 L702.4,853.1 L645.3,912.5 L601.9,912.5Z"/><path d="M350,802 L380.8,802 L371.1,809.7 L350,826.3Z"/><path d="M378.6,802 L416.2,802 L506.1,912.5 L468.4,912.5Z"/><path d="M378.1,811.9 L458.8,912.5 L422.5,912.5 L374.9,851.8 L350,872.9 L350,833.3Z"/><path d="M701,887 C704,891 704,894 708,895 C715,896 719,902 718,911 L684,911 C683,902 687,896 694,895 C698,894 698,891 701,887Z"/><path d="M701,903 C706,904 707,908 707,911 L695,911 C695,908 696,904 701,903Z" fill="#c3cdcb"/><path d="M368,887 C371,891 371,894 375,895 C382,896 386,902 385,911 L351,911 C350,902 354,896 361,895 C365,894 365,891 368,887Z"/><path d="M368,903 C373,904 374,908 374,911 L362,911 C362,908 363,904 368,903Z" fill="#c3cdcb"/><g transform="translate(527.5,805)"><g transform="scale(1,1)"><path d="M-7,1 C-30,-1 -55,1 -70,3 C-63,12 -50,12 -38,9 C-28,6 -18,6 -7,8Z"/><path d="M-5,0 L-17,0 L-18,42 Q-14,50 -5,46Z"/><path d="M-17,10 C-38,4 -58,18 -53,44 C-48,48 -40,44 -34,46 C-28,40 -22,38 -17,38 L-17,30 C-28,30 -36,36 -42,36 C-46,24 -36,16 -17,18Z"/><path d="M-18,24 C-28,22 -36,26 -38,32 C-32,29 -26,28 -18,29Z"/><path d="M-5,46 C-18,44 -30,56 -32,72 C-26,70 -22,74 -18,70 C-14,62 -8,58 -5,58Z"/><path d="M-12,54 C-18,56 -22,62 -23,66 C-18,62 -15,60 -11,59Z" fill="#c3cdcb"/><path d="M-2.5,50 C-12,64 -12,74 -8,80 C-6,84 -4,94 -2.5,103Z"/></g><g transform="scale(-1,1)"><path d="M-7,1 C-30,-1 -55,1 -70,3 C-63,12 -50,12 -38,9 C-28,6 -18,6 -7,8Z"/><path d="M-5,0 L-17,0 L-18,42 Q-14,50 -5,46Z"/><path d="M-17,10 C-38,4 -58,18 -53,44 C-48,48 -40,44 -34,46 C-28,40 -22,38 -17,38 L-17,30 C-28,30 -36,36 -42,36 C-46,24 -36,16 -17,18Z"/><path d="M-18,24 C-28,22 -36,26 -38,32 C-32,29 -26,28 -18,29Z"/><path d="M-5,46 C-18,44 -30,56 -32,72 C-26,70 -22,74 -18,70 C-14,62 -8,58 -5,58Z"/><path d="M-12,54 C-18,56 -22,62 -23,66 C-18,62 -15,60 -11,59Z" fill="#c3cdcb"/><path d="M-2.5,50 C-12,64 -12,74 -8,80 C-6,84 -4,94 -2.5,103Z"/></g></g><g transform="translate(894.5,802)"><g transform="scale(1,1)"><path d="M-7,1 C-30,-1 -55,1 -70,3 C-63,12 -50,12 -38,9 C-28,6 -18,6 -7,8Z"/><path d="M-5,0 L-17,0 L-18,42 Q-14,50 -5,46Z"/><path d="M-17,10 C-38,4 -58,18 -53,44 C-48,48 -40,44 -34,46 C-28,40 -22,38 -17,38 L-17,30 C-28,30 -36,36 -42,36 C-46,24 -36,16 -17,18Z"/><path d="M-18,24 C-28,22 -36,26 -38,32 C-32,29 -26,28 -18,29Z"/><path d="M-5,46 C-18,44 -30,56 -32,72 C-26,70 -22,74 -18,70 C-14,62 -8,58 -5,58Z"/><path d="M-12,54 C-18,56 -22,62 -23,66 C-18,62 -15,60 -11,59Z" fill="#c3cdcb"/><path d="M-2.5,50 C-12,64 -12,74 -8,80 C-6,84 -4,94 -2.5,103Z"/></g><g transform="scale(-1,1)"><path d="M-7,1 C-30,-1 -55,1 -70,3 C-63,12 -50,12 -38,9 C-28,6 -18,6 -7,8Z"/><path d="M-5,0 L-17,0 L-18,42 Q-14,50 -5,46Z"/><path d="M-17,10 C-38,4 -58,18 -53,44 C-48,48 -40,44 -34,46 C-28,40 -22,38 -17,38 L-17,30 C-28,30 -36,36 -42,36 C-46,24 -36,16 -17,18Z"/><path d="M-18,24 C-28,22 -36,26 -38,32 C-32,29 -26,28 -18,29Z"/><path d="M-5,46 C-18,44 -30,56 -32,72 C-26,70 -22,74 -18,70 C-14,62 -8,58 -5,58Z"/><path d="M-12,54 C-18,56 -22,62 -23,66 C-18,62 -15,60 -11,59Z" fill="#c3cdcb"/><path d="M-2.5,50 C-12,64 -12,74 -8,80 C-6,84 -4,94 -2.5,103Z"/></g></g></g><path d="M528,798 L524.5,911" stroke="#858e8b" stroke-width="3.2"/><path d="M893.5,795 L898,911" stroke="#858e8b" stroke-width="3.2"/></svg>
<div class="abs" style="left:0;top:0;width:550px;height:346px;clip-path:polygon(0 0,550px 0,550px 226px,0 233px)">
<div class="abs" style="left:0;top:0;width:500px;height:300px;transform-origin:0 0;transform:matrix3d(1.190149,-0.125539,0,-0.00045033,-0.165860,1.177229,0,-0.00064423,0,0,1,0,-78.0715,-24.2935,0,1)">
<svg width="500" height="300" viewBox="0 0 500 300" style="left:0;top:0"><defs><pattern id="tile3d" width="100" height="100" patternUnits="userSpaceOnUse"><rect width="100" height="100" fill="#4b7792"/><g stroke="#3c6780" stroke-width="2.6" stroke-dasharray="1.4 1.6" fill="none"><path d="M12.5,37.5 L37.5,12.5"/><path d="M62.5,12.5 L87.5,37.5"/><path d="M12.5,62.5 L37.5,87.5"/><path d="M62.5,87.5 L87.5,62.5"/><rect x="35.8" y="-14.2" width="28.4" height="28.4"/><rect x="-14.2" y="35.8" width="28.4" height="28.4"/><rect x="85.8" y="35.8" width="28.4" height="28.4"/><rect x="35.8" y="85.8" width="28.4" height="28.4"/></g><path d="M-13.25,-32 L13.25,-32 L32,-13.25 L32,13.25 L13.25,32 L-13.25,32 L-32,13.25 L-32,-13.25Z" fill="#c0cfd2"/><path d="M-12.34,-29.8 L12.34,-29.8 L29.8,-12.34 L29.8,12.34 L12.34,29.8 L-12.34,29.8 L-29.8,12.34 L-29.8,-12.34Z" fill="none" stroke="#6a909f" stroke-width="0.7"/><path d="M86.75,-32 L113.25,-32 L132,-13.25 L132,13.25 L113.25,32 L86.75,32 L68,13.25 L68,-13.25Z" fill="#c0cfd2"/><path d="M87.66,-29.8 L112.34,-29.8 L129.8,-12.34 L129.8,12.34 L112.34,29.8 L87.66,29.8 L70.2,12.34 L70.2,-12.34Z" fill="none" stroke="#6a909f" stroke-width="0.7"/><path d="M-13.25,68 L13.25,68 L32,86.75 L32,113.25 L13.25,132 L-13.25,132 L-32,113.25 L-32,86.75Z" fill="#c0cfd2"/><path d="M-12.34,70.2 L12.34,70.2 L29.8,87.66 L29.8,112.34 L12.34,129.8 L-12.34,129.8 L-29.8,112.34 L-29.8,87.66Z" fill="none" stroke="#6a909f" stroke-width="0.7"/><path d="M86.75,68 L113.25,68 L132,86.75 L132,113.25 L113.25,132 L86.75,132 L68,113.25 L68,86.75Z" fill="#c0cfd2"/><path d="M87.66,70.2 L112.34,70.2 L129.8,87.66 L129.8,112.34 L112.34,129.8 L87.66,129.8 L70.2,112.34 L70.2,87.66Z" fill="none" stroke="#6a909f" stroke-width="0.7"/><path d="M36.75,18 L63.25,18 L82,36.75 L82,63.25 L63.25,82 L36.75,82 L18,63.25 L18,36.75Z" fill="#c0cfd2"/><path d="M37.66,20.2 L62.34,20.2 L79.8,37.66 L79.8,62.34 L62.34,79.8 L37.66,79.8 L20.2,62.34 L20.2,37.66Z" fill="none" stroke="#6a909f" stroke-width="0.7"/><path d="M0.00,-3.00 L-5.30,-11.87 L-5.91,-19.11 L0.00,-27.00 L5.91,-19.11 L5.30,-11.87Z M2.12,-2.12 L4.65,-12.14 L9.33,-17.69 L20.86,-20.86 L17.69,-9.33 L12.14,-4.65Z M3.00,-0.00 L11.87,-5.30 L19.11,-5.91 L27.00,-0.00 L19.11,5.91 L11.87,5.30Z M2.12,2.12 L12.14,4.65 L17.69,9.33 L20.86,20.86 L9.33,17.69 L4.65,12.14Z M0.00,3.00 L5.30,11.87 L5.91,19.11 L0.00,27.00 L-5.91,19.11 L-5.30,11.87Z M-2.12,2.12 L-4.65,12.14 L-9.33,17.69 L-20.86,20.86 L-17.69,9.33 L-12.14,4.65Z M-3.00,0.00 L-11.87,5.30 L-19.11,5.91 L-27.00,0.00 L-19.11,-5.91 L-11.87,-5.30Z M-2.12,-2.12 L-12.14,-4.65 L-17.69,-9.33 L-20.86,-20.86 L-9.33,-17.69 L-4.65,-12.14Z " fill="#4e8096" stroke="#3b677c" stroke-width="0.9"/><path d="M-9,-9 L9,9 M9,-9 L-9,9" stroke="#9fb8be" stroke-width="0.9"/><path d="M100.00,-3.00 L94.70,-11.87 L94.09,-19.11 L100.00,-27.00 L105.91,-19.11 L105.30,-11.87Z M102.12,-2.12 L104.65,-12.14 L109.33,-17.69 L120.86,-20.86 L117.69,-9.33 L112.14,-4.65Z M103.00,-0.00 L111.87,-5.30 L119.11,-5.91 L127.00,-0.00 L119.11,5.91 L111.87,5.30Z M102.12,2.12 L112.14,4.65 L117.69,9.33 L120.86,20.86 L109.33,17.69 L104.65,12.14Z M100.00,3.00 L105.30,11.87 L105.91,19.11 L100.00,27.00 L94.09,19.11 L94.70,11.87Z M97.88,2.12 L95.35,12.14 L90.67,17.69 L79.14,20.86 L82.31,9.33 L87.86,4.65Z M97.00,0.00 L88.13,5.30 L80.89,5.91 L73.00,0.00 L80.89,-5.91 L88.13,-5.30Z M97.88,-2.12 L87.86,-4.65 L82.31,-9.33 L79.14,-20.86 L90.67,-17.69 L95.35,-12.14Z " fill="#4e8096" stroke="#3b677c" stroke-width="0.9"/><path d="M91,-9 L109,9 M109,-9 L91,9" stroke="#9fb8be" stroke-width="0.9"/><path d="M0.00,97.00 L-5.30,88.13 L-5.91,80.89 L0.00,73.00 L5.91,80.89 L5.30,88.13Z M2.12,97.88 L4.65,87.86 L9.33,82.31 L20.86,79.14 L17.69,90.67 L12.14,95.35Z M3.00,100.00 L11.87,94.70 L19.11,94.09 L27.00,100.00 L19.11,105.91 L11.87,105.30Z M2.12,102.12 L12.14,104.65 L17.69,109.33 L20.86,120.86 L9.33,117.69 L4.65,112.14Z M0.00,103.00 L5.30,111.87 L5.91,119.11 L0.00,127.00 L-5.91,119.11 L-5.30,111.87Z M-2.12,102.12 L-4.65,112.14 L-9.33,117.69 L-20.86,120.86 L-17.69,109.33 L-12.14,104.65Z M-3.00,100.00 L-11.87,105.30 L-19.11,105.91 L-27.00,100.00 L-19.11,94.09 L-11.87,94.70Z M-2.12,97.88 L-12.14,95.35 L-17.69,90.67 L-20.86,79.14 L-9.33,82.31 L-4.65,87.86Z " fill="#4e8096" stroke="#3b677c" stroke-width="0.9"/><path d="M-9,91 L9,109 M9,91 L-9,109" stroke="#9fb8be" stroke-width="0.9"/><path d="M100.00,97.00 L94.70,88.13 L94.09,80.89 L100.00,73.00 L105.91,80.89 L105.30,88.13Z M102.12,97.88 L104.65,87.86 L109.33,82.31 L120.86,79.14 L117.69,90.67 L112.14,95.35Z M103.00,100.00 L111.87,94.70 L119.11,94.09 L127.00,100.00 L119.11,105.91 L111.87,105.30Z M102.12,102.12 L112.14,104.65 L117.69,109.33 L120.86,120.86 L109.33,117.69 L104.65,112.14Z M100.00,103.00 L105.30,111.87 L105.91,119.11 L100.00,127.00 L94.09,119.11 L94.70,111.87Z M97.88,102.12 L95.35,112.14 L90.67,117.69 L79.14,120.86 L82.31,109.33 L87.86,104.65Z M97.00,100.00 L88.13,105.30 L80.89,105.91 L73.00,100.00 L80.89,94.09 L88.13,94.70Z M97.88,97.88 L87.86,95.35 L82.31,90.67 L79.14,79.14 L90.67,82.31 L95.35,87.86Z " fill="#4e8096" stroke="#3b677c" stroke-width="0.9"/><path d="M91,91 L109,109 M109,91 L91,109" stroke="#9fb8be" stroke-width="0.9"/><rect x="39.4" y="-10.6" width="21.2" height="21.2" fill="#c0cfd2"/><rect x="41.4" y="-8.6" width="17.2" height="17.2" fill="none" stroke="#4c7b90" stroke-width="0.8"/><g fill="#325465"><path d="M50,0 C49.5,-5 47.5,-8.6 42.2,-7.8 C41.4,-2.5 45,-0.5 50,0Z"/><path d="M50,0 C50.5,-5 52.5,-8.6 57.8,-7.8 C58.6,-2.5 55,-0.5 50,0Z"/><path d="M50,0 C49.5,5 47.5,8.6 42.2,7.8 C41.4,2.5 45,0.5 50,0Z"/><path d="M50,0 C50.5,5 52.5,8.6 57.8,7.8 C58.6,2.5 55,0.5 50,0Z"/></g><rect x="-10.6" y="39.4" width="21.2" height="21.2" fill="#c0cfd2"/><rect x="-8.6" y="41.4" width="17.2" height="17.2" fill="none" stroke="#4c7b90" stroke-width="0.8"/><g fill="#325465"><path d="M0,50 C-0.5,45 -2.5,41.4 -7.8,42.2 C-8.6,47.5 -5,49.5 0,50Z"/><path d="M0,50 C0.5,45 2.5,41.4 7.8,42.2 C8.6,47.5 5,49.5 0,50Z"/><path d="M0,50 C-0.5,55 -2.5,58.6 -7.8,57.8 C-8.6,52.5 -5,50.5 0,50Z"/><path d="M0,50 C0.5,55 2.5,58.6 7.8,57.8 C8.6,52.5 5,50.5 0,50Z"/></g><rect x="89.4" y="39.4" width="21.2" height="21.2" fill="#c0cfd2"/><rect x="91.4" y="41.4" width="17.2" height="17.2" fill="none" stroke="#4c7b90" stroke-width="0.8"/><g fill="#325465"><path d="M100,50 C99.5,45 97.5,41.4 92.2,42.2 C91.4,47.5 95,49.5 100,50Z"/><path d="M100,50 C100.5,45 102.5,41.4 107.8,42.2 C108.6,47.5 105,49.5 100,50Z"/><path d="M100,50 C99.5,55 97.5,58.6 92.2,57.8 C91.4,52.5 95,50.5 100,50Z"/><path d="M100,50 C100.5,55 102.5,58.6 107.8,57.8 C108.6,52.5 105,50.5 100,50Z"/></g><rect x="39.4" y="89.4" width="21.2" height="21.2" fill="#c0cfd2"/><rect x="41.4" y="91.4" width="17.2" height="17.2" fill="none" stroke="#4c7b90" stroke-width="0.8"/><g fill="#325465"><path d="M50,100 C49.5,95 47.5,91.4 42.2,92.2 C41.4,97.5 45,99.5 50,100Z"/><path d="M50,100 C50.5,95 52.5,91.4 57.8,92.2 C58.6,97.5 55,99.5 50,100Z"/><path d="M50,100 C49.5,105 47.5,108.6 42.2,107.8 C41.4,102.5 45,100.5 50,100Z"/><path d="M50,100 C50.5,105 52.5,108.6 57.8,107.8 C58.6,102.5 55,100.5 50,100Z"/></g><g transform="translate(50 50) scale(1.2) translate(-50 -50)"><g fill="none" stroke="#4f737f" stroke-width="2.5"><circle cx="38.5" cy="38.5" r="9.2"/><circle cx="61.5" cy="38.5" r="9.2"/><circle cx="38.5" cy="61.5" r="9.2"/><circle cx="61.5" cy="61.5" r="9.2"/></g><g fill="none" stroke="#4f737f" stroke-width="2"><path d="M57,37 Q50,23 43,37"/><path d="M43,63 Q50,77 57,63"/><path d="M37,57 Q23,50 37,43"/><path d="M63,43 Q77,50 63,57"/></g><g fill="#4f737f"><ellipse cx="50" cy="43.5" rx="3.4" ry="6.5"/><ellipse cx="50" cy="56.5" rx="3.4" ry="6.5"/><ellipse cx="43.5" cy="50" rx="6.5" ry="3.4"/><ellipse cx="56.5" cy="50" rx="6.5" ry="3.4"/><circle cx="50" cy="33" r="2.4"/><circle cx="50.0" cy="24.5" r="1.6"/><circle cx="50" cy="67" r="2.4"/><circle cx="50.0" cy="75.5" r="1.6"/><circle cx="33" cy="50" r="2.4"/><circle cx="24.5" cy="50.0" r="1.6"/><circle cx="67" cy="50" r="2.4"/><circle cx="75.5" cy="50.0" r="1.6"/><ellipse cx="37.5" cy="37.5" rx="3.8" ry="2.7" transform="rotate(45 37.5 37.5)"/><circle cx="29.5" cy="29.5" r="2"/><ellipse cx="62.5" cy="37.5" rx="3.8" ry="2.7" transform="rotate(-45 62.5 37.5)"/><circle cx="70.5" cy="29.5" r="2"/><ellipse cx="37.5" cy="62.5" rx="3.8" ry="2.7" transform="rotate(-45 37.5 62.5)"/><circle cx="29.5" cy="70.5" r="2"/><ellipse cx="62.5" cy="62.5" rx="3.8" ry="2.7" transform="rotate(45 62.5 62.5)"/><circle cx="70.5" cy="70.5" r="2"/></g></g></pattern></defs><rect width="500" height="300" fill="url(#tile3d)"/><path d="M0,100H500M0,200H500M0,0H500M100,0V300M200,0V300M300,0V300M400,0V300" stroke="#5f6863" stroke-width="1.5" fill="none"/></svg>
</div></div>
<svg width="550" height="346" viewBox="350 565 550 346" style="left:0;top:0"><defs><linearGradient id="bandg" x1="0" y1="0" x2="0" y2="1"><stop offset="0" stop-color="#6f7571"/><stop offset="0.55" stop-color="#7f8682"/><stop offset="1" stop-color="#9aa3a0"/></linearGradient><linearGradient id="shg" x1="0" y1="0" x2="0" y2="1"><stop offset="0" stop-color="#2a3232" stop-opacity="0.18"/><stop offset="1" stop-color="#2a3232" stop-opacity="0"/></linearGradient></defs><path d="M350,806 L900,799 L900,820 L350,827Z" fill="url(#shg)"/><path d="M350,797.2 L900,790 L900,799.5 L350,806.6Z" fill="url(#bandg)"/></svg>
<div class="abs" style="left:0;top:0;width:550px;height:346px;background:linear-gradient(to right,rgba(62,72,68,0.29),rgba(62,72,68,0.21) 55%,rgba(62,72,68,0.05) 86%,rgba(62,72,68,0) 100%)"></div>
</div>
<div class="abs" style="left:902px;top:518.8px;width:557.5px;height:50.2px;background:#2b2b2c;"></div>
<div class="abs" style="left:902px;top:569px;width:557.5px;height:342px;background:#1d1d1f;"></div>
<div class="abs" style="left:902px;top:911px;width:557.5px;height:27px;background:#2b2b2c;"></div>
<svg width="14" height="14" viewBox="0 0 14 14" style="left:910px;top:524px"><rect x="0.5" y="0.5" width="13" height="13" fill="#222" stroke="#dcdcdc" stroke-width="1"/><rect x="1" y="1" width="6" height="6" fill="#dcdcdc"/><rect x="7" y="7" width="6" height="6" fill="#dcdcdc"/></svg>
<div class="t b" style="left:932.5px;top:524.5px;font-size:13px;color:#e8e8e8;letter-spacing:-0.2px;letter-spacing:-0.218px">Levels - 2D VIEW</div>
<svg width="14" height="14" viewBox="0 0 14 14" style="left:1365px;top:524px"><g transform="rotate(45 7 7)"><rect x="4.2" y="0.5" width="5.6" height="2" fill="#dcdcdc"/><rect x="5" y="2" width="4" height="4.2" fill="#dcdcdc"/><path d="M2.8,8.2 L11.2,8.2 L9.6,5.8 L4.4,5.8 Z" fill="#dcdcdc"/><rect x="6.5" y="8" width="1" height="6.5" fill="#dcdcdc"/></g></svg>
<svg width="10" height="10" viewBox="0 0 10 10" style="left:1391px;top:526px"><rect x="0.6" y="0.6" width="8.8" height="8.8" fill="none" stroke="#dcdcdc" stroke-width="1.2"/><rect x="0" y="5" width="5" height="5" fill="#dcdcdc"/></svg>
<svg width="12" height="12" viewBox="0 0 12 12" style="left:1415px;top:525px"><path d="M0.6,3.5V0.6H3.5 M8.5,0.6H11.4V3.5 M11.4,8.5V11.4H8.5 M3.5,11.4H0.6V8.5" fill="none" stroke="#dcdcdc" stroke-width="1.2"/><rect x="3" y="3" width="6" height="6" fill="#dcdcdc"/></svg>
<svg width="10" height="10" viewBox="0 0 10 10" style="left:1441px;top:526px"><path d="M0,0L10,10M10,0L0,10" stroke="#dcdcdc" stroke-width="1.1"/></svg>
<svg width="17" height="16" viewBox="0 0 17 16" style="left:909px;top:548px"><rect x="0.7" y="0.7" width="11" height="10.5" fill="#2b2b2b" stroke="#dcdcdc" stroke-width="1.3"/><path d="M5,12 V15 H16 V5 H12.5" fill="none" stroke="#dcdcdc" stroke-width="1.3"/><rect x="12.4" y="6" width="3" height="8.4" fill="#999"/></svg>
<svg width="16" height="16" viewBox="0 0 16 16" style="left:938px;top:548px"><path d="M0,0H12.5L16,3.5V16H0Z" fill="#dcdcdc"/><rect x="3" y="0" width="8.5" height="5.4" fill="#2b2b2b"/><rect x="8" y="1" width="2.2" height="3.4" fill="#dcdcdc"/><rect x="2.4" y="9" width="11.2" height="7" fill="#dcdcdc" stroke="#2b2b2b" stroke-width="0"/><rect x="0" y="13.4" width="1.6" height="1.4" fill="#2b2b2b"/></svg>
<svg width="14" height="16" viewBox="0 0 14 16" style="left:968px;top:548px"><path d="M0,0H8V2H2V12H0Z" fill="#dcdcdc"/><path d="M3.5,3.5H10L14,7.5V16H3.5Z" fill="#dcdcdc"/><path d="M10,3.5V7.5H14" fill="none" stroke="#2b2b2b" stroke-width="0.9"/></svg>
<svg width="14" height="13" viewBox="0 0 14 13" style="left:998px;top:550px"><g fill="#555"><rect x="0" y="4.5" width="4" height="4" fill="none" stroke="#555"/><rect x="9" y="0" width="5" height="3"/><rect x="9" y="5" width="5" height="3"/><rect x="9" y="10" width="5" height="3"/></g><path d="M4,6.5 L9,1.5 M4,6.5H9 M4,6.5 L9,11.5" stroke="#555" stroke-width="1"/></svg>
<div class="t" style="left:1024px;top:551px;font-size:11px;color:#5a5a5a;letter-spacing:-0.3px">UV</div>
<svg width="7" height="5" viewBox="0 0 7 5" style="left:1047px;top:553.5px"><path d="M0.5,0.5 L3.5,3.6 L6.5,0.5" fill="none" stroke="#5a5a5a" stroke-width="1.1"/></svg>
<div class="t b" style="left:1065.5px;top:545px;font-size:19px;color:#dcdcdc;font-family:'Liberation Serif',serif;font-style:italic">i</div>
<svg width="17" height="16" viewBox="0 0 17 16" style="left:1089px;top:548px"><path d="M1.5,0V15.3H17" stroke="#dcdcdc" stroke-width="1.3" fill="none"/><rect x="4" y="3" width="2" height="12" fill="#dcdcdc"/><rect x="7.2" y="5.5" width="2" height="9.5" fill="#dcdcdc"/><rect x="10.4" y="8" width="2" height="7" fill="#dcdcdc"/><rect x="13.6" y="10.5" width="2" height="4.5" fill="#dcdcdc"/></svg>
<svg width="304.8" height="304" viewBox="0 0 304.8 304" style="left:1027.7px;top:586.6px"><defs><filter id="cl" x="0" y="0" width="100%" height="100%"><feTurbulence type="fractalNoise" baseFrequency="0.022" numOctaves="3" seed="7"/><feColorMatrix type="matrix" values="0 0 0 0 0.74  0 0 0 0 0.74  0 0 0 0 0.76  1.7 1.7 0 0 -1.42"/><feGaussianBlur stdDeviation="1.2"/></filter></defs><rect width="304.8" height="304" fill="#f4f4f6"/><rect width="304.8" height="304" filter="url(#cl)"/><g stroke="#050505" fill="none"><rect x="0.6" y="0.6" width="303.6" height="302.8" stroke-width="1.4"/><path d="M0,76.8H304.8 M0,226.8H304.8" stroke-width="2.8"/><path d="M79,0V76.8 M156,0V76.8 M232.3,0V76.8 M79,226.8V304 M156,226.8V304 M232.3,226.8V304" stroke-width="2.3"/><path d="M3.6,2V76 M3.6,229V302" stroke-width="1.6"/><path d="M303.8,0V304" stroke-width="0.8"/><path d="M37.9,76.8V226.8 M75.7,76.8V226.8 M152.3,76.8V226.8 M266.7,76.8V226.8 M0,190.6H304.8" stroke-width="1"/><path d="M114,76.8V226.8 M190.6,76.8V226.8 M228.5,76.8V226.8" stroke-width="1" stroke-dasharray="7 0.8 11 0.6 4 0.9"/><path d="M0,113.9H152 M0,152.2H304.8" stroke-width="0.9" stroke-dasharray="16 1 9 0.7 24 1.2" opacity="0.85"/><path d="M152,113.9H304.8" stroke-width="1.1" stroke-dasharray="30 1 12 2"/></g><circle cx="284" cy="18" r="1.1" fill="#111"/><path d="M302.5,128 l2.3,-3 v6z" fill="#111"/></svg>
<div class="t" style="left:907px;top:897.5px;font-size:11.5px;color:#0a0a0a;letter-spacing:-0.1px;letter-spacing:-0.322px">2048 x 2048 (Grayscale, 16bpc)</div>
<div class="abs" style="left:909.5px;top:912px;width:1px;height:25px;background:#1c1c1c;"></div>
<div class="abs" style="left:912px;top:912px;width:1px;height:25px;background:#1c1c1c;"></div>
<svg width="20" height="16" viewBox="0 0 20 16" style="left:923px;top:916px"><path d="M7.5,6.5 L15,10 L7.5,13.5 L0,10Z" fill="#3d8fe0"/><path d="M7.5,3.5 L15,7 L7.5,10.5 L0,7Z" fill="#3cb45a" stroke="#2b2b2b" stroke-width="0.6"/><path d="M7.5,0.5 L15,4 L7.5,7.5 L0,4Z" fill="#e04a3a" stroke="#2b2b2b" stroke-width="0.6"/><path d="M14,12 L16.4,14.4 L18.8,12" fill="none" stroke="#aaa" stroke-width="1.1"/></svg>
<div class="abs" style="left:947px;top:916px;width:16px;height:16px;background:#000;"></div>
<div class="abs" style="left:970px;top:916px;width:5px;height:16px;background:#4a4a4a;"></div>
<div class="abs" style="left:975.6px;top:916px;width:5px;height:16px;background:#444;"></div>
<div class="abs" style="left:981.2px;top:916px;width:5px;height:16px;background:#4a4a4a;"></div>
<div class="abs" style="left:992px;top:912px;width:27px;height:24px;background:#4d4d4d;border-radius:3px"></div>
<svg width="17" height="16" viewBox="0 0 17 16" style="left:997px;top:916px"><rect x="0.6" y="0.6" width="15.8" height="11" fill="#2a4a6a" stroke="#dcdcdc" stroke-width="1.2"/><circle cx="6.5" cy="5" r="2.6" fill="#e04a3a"/><circle cx="10.5" cy="5" r="2.6" fill="#3cb45a"/><circle cx="8.5" cy="8" r="2.6" fill="#3d8fe0"/><rect x="7" y="12" width="3" height="2" fill="#dcdcdc"/><rect x="3.5" y="14" width="10" height="1.6" fill="#dcdcdc"/></svg>
<svg width="14" height="14" viewBox="0 0 14 14" style="left:1239px;top:917px"><rect x="0" y="0" width="4" height="4" fill="#dcdcdc"/><rect x="5" y="0" width="4" height="4" fill="#dcdcdc"/><rect x="10" y="0" width="4" height="4" fill="#dcdcdc"/><rect x="0" y="5" width="4" height="4" fill="#dcdcdc"/><rect x="5" y="5" width="4" height="4" fill="#dcdcdc"/><rect x="10" y="5" width="4" height="4" fill="#dcdcdc"/><rect x="0" y="10" width="4" height="4" fill="#dcdcdc"/><rect x="5" y="10" width="4" height="4" fill="#dcdcdc"/><rect x="10" y="10" width="4" height="4" fill="#dcdcdc"/></svg>
<svg width="17" height="17" viewBox="0 0 17 17" style="left:1266px;top:916px"><circle cx="6" cy="1.6" r="1.5" fill="#dcdcdc"/><path d="M0,3.6H12V5H8V15H6.7V10H5.3V15H4V5H0Z" fill="#dcdcdc"/><rect x="10.5" y="10.5" width="5.6" height="5.6" fill="#2b2b2c" stroke="#dcdcdc" stroke-width="0.9"/><rect x="11" y="11" width="2.4" height="2.4" fill="#dcdcdc"/><rect x="13.3" y="13.3" width="2.4" height="2.4" fill="#dcdcdc"/></svg>
<svg width="12" height="12" viewBox="0 0 12 12" style="left:1292.5px;top:918.5px"><rect x="2" y="2" width="8" height="8" fill="#dcdcdc"/><path d="M0.5,3V0.5H3 M9,0.5H11.5V3 M11.5,9V11.5H9 M3,11.5H0.5V9" fill="none" stroke="#a0a0a0" stroke-width="1"/></svg>
<svg width="16" height="15" viewBox="0 0 16 15" style="left:1309px;top:917px"><path d="M8,0 L10,2.4 H6Z M8,15 L10,12.6 H6Z M0,7.5 L2.4,5.5 V9.5Z M16,7.5 L13.6,5.5 V9.5Z" fill="#999"/><text x="8" y="10.2" font-size="7" text-anchor="middle" fill="#999" font-family="Liberation Sans,sans-serif" letter-spacing="-0.4">1:1</text></svg>
<svg width="7" height="7" viewBox="0 0 7 7" style="left:1335.5px;top:920.5px"><circle cx="3.5" cy="3.5" r="3.5" fill="#dcdcdc"/><rect x="1.5" y="2.9" width="4" height="1.2" fill="#2b2b2b"/></svg>
<div class="abs" style="left:1349.5px;top:915px;width:67.5px;height:18.5px;background:#222;border:1px solid #4c4c4c;border-radius:3px"></div>
<div class="t" style="left:1352px;top:918.5px;font-size:12px;color:#e4e4e4;width:60px;text-align:right;letter-spacing:-0.2px;letter-spacing:-0.400px">14.89%</div>
<svg width="7" height="7" viewBox="0 0 7 7" style="left:1422.5px;top:920.5px"><circle cx="3.5" cy="3.5" r="3.5" fill="#dcdcdc"/><path d="M1.5,3.5H5.5M3.5,1.5V5.5" stroke="#2b2b2b" stroke-width="1.2"/></svg>
<div class="abs" style="left:1328px;top:913px;width:1.2px;height:23px;background:#1e1e1e;"></div>
<div class="abs" style="left:1436.3px;top:913px;width:1.2px;height:23px;background:#1e1e1e;"></div>
<div class="abs" style="left:1439px;top:912px;width:19.5px;height:24px;background:#505050;border-radius:3px"></div>
<svg width="9" height="12" viewBox="0 0 9 12" style="left:1444px;top:917.5px"><rect x="0" y="5" width="9" height="7" rx="1" fill="#dcdcdc"/><path d="M2,5.5 V3.4 A2.5,2.5 0 0 1 7,3.4 V5.5" fill="none" stroke="#dcdcdc" stroke-width="1.5"/><circle cx="4.5" cy="8.3" r="1" fill="#4d4d4d"/></svg>
</body></html>
